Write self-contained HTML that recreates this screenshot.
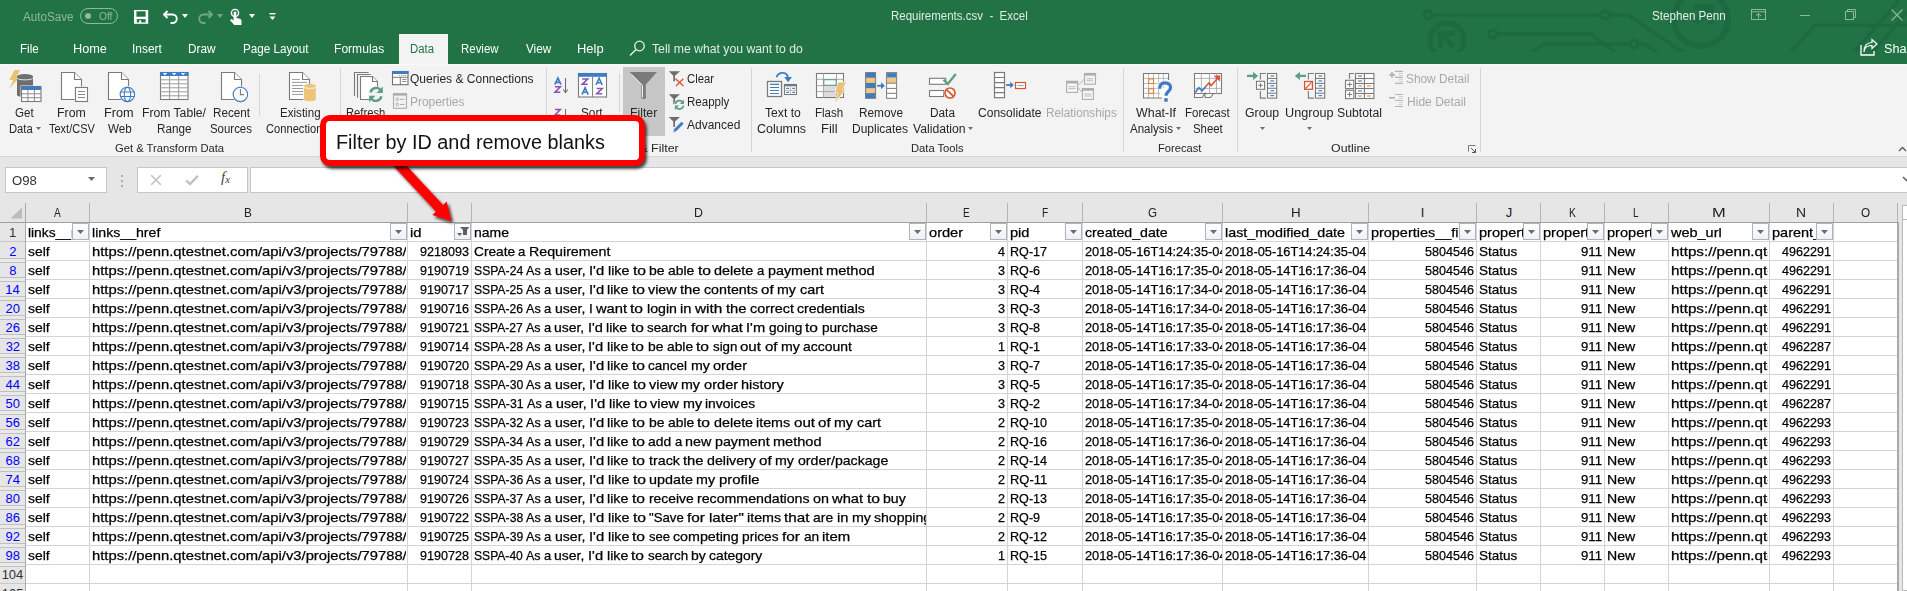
<!DOCTYPE html>
<html><head><meta charset="utf-8"><style>
html,body{margin:0;padding:0;width:1907px;height:591px;overflow:hidden;background:#fff;}
.r{position:absolute;}
.t{position:absolute;white-space:pre;line-height:1;font-family:"Liberation Sans",sans-serif;transform-origin:0 0;}
.g .t{-webkit-text-stroke:0.25px #000;}
svg.r{overflow:visible;}
svg.r.c{overflow:hidden;}
</style></head><body>
<div class="r" style="left:0px;top:0px;width:1907px;height:64px;background:#217346;"></div>
<svg class="r" style="left:1400px;top:0px;overflow:hidden;" width="507" height="52" viewBox="0 0 507 52"><g fill="none" stroke="#1e6a40" stroke-width="3.5">
<circle cx="28" cy="15" r="4"/><line x1="32" y1="15" x2="201" y2="15"/><circle cx="205" cy="15" r="4"/>
<polyline points="209,15 228,15 300,64"/>
<circle cx="93" cy="34" r="4"/><polyline points="97,34 191,34 232,64"/>
<polyline points="128,56 143,44 230,44"/><circle cx="234" cy="44" r="4"/><polyline points="238,44 245,44 262,56"/>
<circle cx="47" cy="40" r="17" stroke-width="5"/>
<circle cx="301" cy="19" r="27" stroke-width="6"/>
<polyline points="385,58 415,25.5 507,25.5"/>
<line x1="450" y1="57" x2="500" y2="-1"/><line x1="470" y1="55" x2="515" y2="3"/>
</g>
<g fill="#1e6a40"><path d="M38,31 L55,31 L55,36 L47,36 L56,45 L52,49 L43,40 L43,48 L38,48Z"/>
<path d="M294,4 L314,4 L314,24 L308,24 L308,14 L297,25 L293,21 L304,10 L294,10Z"/></g></svg>
<div class="t " style="left:22.98px;top:10.85px;font-size:12px;color:#8fb89d;transform:scaleX(0.9712);">AutoSave</div>
<svg class="r" style="left:80px;top:8px;" width="38" height="16" viewBox="0 0 38 16"><rect x="0.5" y="0.5" width="37" height="15" rx="7.5" fill="none" stroke="#8fb89d"/><circle cx="8" cy="8" r="3" fill="#8fb89d"/></svg>
<div class="t " style="left:98.51px;top:11.19px;font-size:11px;color:#8fb89d;transform:scaleX(0.9309);">Off</div>
<svg class="r" style="left:133px;top:9px;" width="16" height="16" viewBox="0 0 16 16"><rect x="1" y="1" width="14.2" height="13.8" fill="#fff"/><rect x="3.4" y="2.3" width="9.2" height="5.4" fill="#217346"/><rect x="3.8" y="10.1" width="8.8" height="3.3" fill="#217346"/><rect x="6.2" y="11.2" width="1.9" height="3" fill="#fff"/></svg>
<svg class="r" style="left:162px;top:9px;" width="17" height="16" viewBox="0 0 17 16"><path d="M2,5.5 H10.5 A4.2,4.2 0 0 1 10.5,14 H8.5" fill="none" stroke="#fff" stroke-width="1.9"/><path d="M5.5,2 L2,5.5 L5.5,9" fill="none" stroke="#fff" stroke-width="1.9"/></svg>
<svg class="r" style="left:182px;top:14px;" width="7" height="5" viewBox="0 0 7 5"><path d="M0,0 H6 L3,4Z" fill="#fff"/></svg>
<svg class="r" style="left:197px;top:9px;" width="17" height="16" viewBox="0 0 17 16"><g opacity="0.75"><path d="M15,5.5 H6.5 A4.2,4.2 0 0 0 6.5,14 H8.5" fill="none" stroke="#8fb89d" stroke-width="1.9"/><path d="M11.5,2 L15,5.5 L11.5,9" fill="none" stroke="#8fb89d" stroke-width="1.9"/></g></svg>
<svg class="r" style="left:217px;top:14px;" width="7" height="5" viewBox="0 0 7 5"><path d="M0,0 H6 L3,4Z" fill="#8fb89d" opacity="0.75"/></svg>
<svg class="r" style="left:229px;top:8px;" width="14" height="18" viewBox="0 0 14 18"><circle cx="6" cy="5" r="3.6" fill="none" stroke="#fff" stroke-width="1.4"/><path d="M4.6,5 A1.4,1.4 0 0 1 7.4,5 V10 L10.8,10.8 A2.2,2.2 0 0 1 12.5,13 V17 H5.3 L1,12.2 L2.2,11 L4.6,12.2Z" fill="#fff"/></svg>
<svg class="r" style="left:249px;top:14px;" width="7" height="5" viewBox="0 0 7 5"><path d="M0,0 H6 L3,4Z" fill="#fff"/></svg>
<svg class="r" style="left:269px;top:13px;" width="8" height="8" viewBox="0 0 8 8"><rect x="0.5" y="0" width="6" height="1.4" fill="#fff"/><path d="M0.5,3.5 H6.5 L3.5,7Z" fill="#fff"/></svg>
<div class="t " style="left:890.56px;top:9.85px;font-size:12px;color:#e1ebe4;transform:scaleX(0.9580);">Requirements.csv  -  Excel</div>
<div class="t " style="left:1652.47px;top:10.35px;font-size:12px;color:#e8efea;transform:scaleX(0.9700);">Stephen Penn</div>
<svg class="r" style="left:1751px;top:9px;" width="15" height="12" viewBox="0 0 15 12"><rect x="0.5" y="0.5" width="14" height="10" fill="none" stroke="#8fb89d"/><line x1="0.5" y1="2.8" x2="14.5" y2="2.8" stroke="#8fb89d"/><path d="M7.5,4.5 L5,7 M7.5,4.5 L10,7 M7.5,4.5 V9.5" stroke="#8fb89d" fill="none"/></svg>
<div class="r" style="left:1800px;top:15px;width:10px;height:1px;background:#8fb89d;"></div>
<svg class="r" style="left:1845px;top:9px;" width="12" height="12" viewBox="0 0 12 12"><rect x="0.5" y="2.5" width="8" height="8" fill="none" stroke="#8fb89d"/><polyline points="2.5,2.5 2.5,0.5 10.5,0.5 10.5,8.5 8.5,8.5" fill="none" stroke="#8fb89d"/></svg>
<svg class="r" style="left:1891px;top:9px;" width="12" height="12" viewBox="0 0 12 12"><path d="M0.5,0.5 L11.5,11.5 M11.5,0.5 L0.5,11.5" stroke="#8fb89d" stroke-width="1.1"/></svg>
<div class="t " style="left:19.85px;top:42.85px;font-size:12px;color:#ffffff;transform:scaleX(0.9653);">File</div>
<div class="t " style="left:72.66px;top:42.85px;font-size:12px;color:#ffffff;transform:scaleX(1.0593);">Home</div>
<div class="t " style="left:132.30px;top:42.85px;font-size:12px;color:#ffffff;transform:scaleX(0.9925);">Insert</div>
<div class="t " style="left:188.23px;top:42.85px;font-size:12px;color:#ffffff;transform:scaleX(0.9835);">Draw</div>
<div class="t " style="left:242.54px;top:42.85px;font-size:12px;color:#ffffff;transform:scaleX(0.9726);">Page Layout</div>
<div class="t " style="left:334.31px;top:42.85px;font-size:12px;color:#ffffff;transform:scaleX(1.0063);">Formulas</div>
<div class="t " style="left:461.46px;top:42.85px;font-size:12px;color:#ffffff;transform:scaleX(0.9534);">Review</div>
<div class="t " style="left:525.75px;top:42.85px;font-size:12px;color:#ffffff;transform:scaleX(0.9779);">View</div>
<div class="t " style="left:576.94px;top:42.85px;font-size:12px;color:#ffffff;transform:scaleX(1.0780);">Help</div>
<div class="r" style="left:399px;top:34px;width:49px;height:30px;background:#f3f3f3;"></div>
<div class="t " style="left:410.47px;top:42.85px;font-size:12px;color:#217346;transform:scaleX(0.9481);">Data</div>
<svg class="r" style="left:629px;top:40px;" width="17" height="16" viewBox="0 0 17 16"><circle cx="10.5" cy="6" r="4.8" fill="none" stroke="#e8efea" stroke-width="1.3"/><line x1="7" y1="9.5" x2="1" y2="15.5" stroke="#e8efea" stroke-width="1.5"/></svg>
<div class="t " style="left:652.33px;top:42.85px;font-size:12px;color:#e3ece6;transform:scaleX(1.0183);">Tell me what you want to do</div>
<svg class="r" style="left:1860px;top:40px;" width="18" height="16" viewBox="0 0 18 16"><path d="M1,5 V15 H14 V11" fill="none" stroke="#fff" stroke-width="1.3"/><path d="M4,12 C4,7 8,5.5 12,5.5 V8.5 L17,4 L12,-0.5 V2.5 C7,2.5 4,6 4,12Z" fill="none" stroke="#fff" stroke-width="1.2"/></svg>
<div class="t " style="left:1883.93px;top:42.85px;font-size:12px;color:#ffffff;transform:scaleX(1.0503);">Share</div>
<div class="r" style="left:0px;top:64px;width:1907px;height:92px;background:#f3f3f3;"></div>
<div class="r" style="left:0px;top:64px;width:1907px;height:1px;background:#f8f8f8;"></div>
<div class="r" style="left:0px;top:156px;width:1907px;height:1px;background:#d5d5d5;"></div>
<div class="r" style="left:623px;top:67px;width:42px;height:69px;background:#c6c6c6;"></div>
<div class="t " style="left:15.42px;top:106.85px;font-size:12px;color:#262626;transform:scaleX(0.9651);">Get</div>
<div class="t " style="left:8.58px;top:122.85px;font-size:12px;color:#262626;transform:scaleX(0.9358);">Data</div>
<div class="t " style="left:57.39px;top:106.85px;font-size:12px;color:#262626;transform:scaleX(1.0297);">From</div>
<div class="t " style="left:48.75px;top:122.85px;font-size:12px;color:#262626;transform:scaleX(0.9156);">Text/CSV</div>
<div class="t " style="left:103.96px;top:106.85px;font-size:12px;color:#262626;transform:scaleX(1.0564);">From</div>
<div class="t " style="left:107.75px;top:122.85px;font-size:12px;color:#262626;transform:scaleX(0.9707);">Web</div>
<div class="t " style="left:141.50px;top:106.85px;font-size:12px;color:#262626;transform:scaleX(1.0137);">From Table/</div>
<div class="t " style="left:157.04px;top:122.85px;font-size:12px;color:#262626;transform:scaleX(0.9751);">Range</div>
<div class="t " style="left:213.04px;top:106.85px;font-size:12px;color:#262626;transform:scaleX(0.9743);">Recent</div>
<div class="t " style="left:210.48px;top:122.85px;font-size:12px;color:#262626;transform:scaleX(0.9525);">Sources</div>
<div class="t " style="left:279.65px;top:106.85px;font-size:12px;color:#262626;transform:scaleX(0.9662);">Existing</div>
<div class="t " style="left:266.43px;top:122.85px;font-size:12px;color:#262626;transform:scaleX(0.9289);">Connections</div>
<div class="t " style="left:346.48px;top:106.85px;font-size:12px;color:#262626;transform:scaleX(0.9341);">Refresh</div>
<div class="t " style="left:410.43px;top:72.85px;font-size:12px;color:#262626;transform:scaleX(1.0017);">Queries &amp; Connections</div>
<div class="t " style="left:581.46px;top:106.85px;font-size:12px;color:#262626;transform:scaleX(0.9824);">Sort</div>
<div class="t " style="left:630.00px;top:106.85px;font-size:12px;color:#262626;transform:scaleX(1.0203);">Filter</div>
<div class="t " style="left:687.03px;top:72.85px;font-size:12px;color:#262626;transform:scaleX(0.9402);">Clear</div>
<div class="t " style="left:686.65px;top:95.85px;font-size:12px;color:#262626;transform:scaleX(0.9623);">Reapply</div>
<div class="t " style="left:686.98px;top:118.85px;font-size:12px;color:#262626;transform:scaleX(0.9985);">Advanced</div>
<div class="t " style="left:764.73px;top:106.85px;font-size:12px;color:#262626;transform:scaleX(1.0123);">Text to</div>
<div class="t " style="left:757.37px;top:122.85px;font-size:12px;color:#262626;transform:scaleX(1.0366);">Columns</div>
<div class="t " style="left:815.05px;top:106.85px;font-size:12px;color:#262626;transform:scaleX(0.9608);">Flash</div>
<div class="t " style="left:820.94px;top:122.85px;font-size:12px;color:#262626;transform:scaleX(1.0782);">Fill</div>
<div class="t " style="left:858.53px;top:106.85px;font-size:12px;color:#262626;transform:scaleX(0.9846);">Remove</div>
<div class="t " style="left:852.02px;top:122.85px;font-size:12px;color:#262626;transform:scaleX(0.9980);">Duplicates</div>
<div class="t " style="left:930.03px;top:106.85px;font-size:12px;color:#262626;transform:scaleX(0.9851);">Data</div>
<div class="t " style="left:912.95px;top:122.85px;font-size:12px;color:#262626;transform:scaleX(1.0160);">Validation</div>
<div class="t " style="left:977.99px;top:106.85px;font-size:12px;color:#262626;transform:scaleX(1.0027);">Consolidate</div>
<div class="t " style="left:1135.95px;top:106.85px;font-size:12px;color:#262626;transform:scaleX(1.0353);">What-If</div>
<div class="t " style="left:1130.48px;top:122.85px;font-size:12px;color:#262626;transform:scaleX(0.9610);">Analysis</div>
<div class="t " style="left:1185.46px;top:106.85px;font-size:12px;color:#262626;transform:scaleX(0.9559);">Forecast</div>
<div class="t " style="left:1193.38px;top:122.85px;font-size:12px;color:#262626;transform:scaleX(0.9471);">Sheet</div>
<div class="t " style="left:1245.38px;top:106.85px;font-size:12px;color:#262626;transform:scaleX(1.0234);">Group</div>
<div class="t " style="left:1285.02px;top:106.85px;font-size:12px;color:#262626;transform:scaleX(1.0538);">Ungroup</div>
<div class="t " style="left:1337.44px;top:106.85px;font-size:12px;color:#262626;transform:scaleX(1.0238);">Subtotal</div>
<div class="t " style="left:410.02px;top:95.85px;font-size:12px;color:#a8a8a8;transform:scaleX(0.9949);">Properties</div>
<div class="t " style="left:1045.63px;top:106.85px;font-size:12px;color:#a8a8a8;transform:scaleX(0.9827);">Relationships</div>
<div class="t " style="left:1406.46px;top:72.85px;font-size:12px;color:#a8a8a8;transform:scaleX(0.9891);">Show Detail</div>
<div class="t " style="left:1406.51px;top:95.85px;font-size:12px;color:#a8a8a8;transform:scaleX(1.0052);">Hide Detail</div>
<div class="t " style="left:115.14px;top:142.69px;font-size:11px;color:#262626;transform:scaleX(1.0195);">Get &amp; Transform Data</div>
<div class="t " style="left:613.43px;top:142.69px;font-size:11px;color:#262626;transform:scaleX(1.1327);">Sort &amp; Filter</div>
<div class="t " style="left:910.78px;top:142.69px;font-size:11px;color:#262626;transform:scaleX(1.0164);">Data Tools</div>
<div class="t " style="left:1158.48px;top:142.69px;font-size:11px;color:#262626;transform:scaleX(1.0141);">Forecast</div>
<div class="t " style="left:1330.91px;top:142.69px;font-size:11px;color:#262626;transform:scaleX(1.1258);">Outline</div>
<svg class="r" style="left:36px;top:127px;" width="6" height="4" viewBox="0 0 6 4"><path d="M0,0 H5 L2.5,3Z" fill="#6a6a6a"/></svg>
<svg class="r" style="left:967.5px;top:127px;" width="6" height="4" viewBox="0 0 6 4"><path d="M0,0 H5 L2.5,3Z" fill="#6a6a6a"/></svg>
<svg class="r" style="left:1176px;top:127px;" width="6" height="4" viewBox="0 0 6 4"><path d="M0,0 H5 L2.5,3Z" fill="#6a6a6a"/></svg>
<svg class="r" style="left:1260px;top:127px;" width="6" height="4" viewBox="0 0 6 4"><path d="M0,0 H5 L2.5,3Z" fill="#6a6a6a"/></svg>
<svg class="r" style="left:1307px;top:127px;" width="6" height="4" viewBox="0 0 6 4"><path d="M0,0 H5 L2.5,3Z" fill="#6a6a6a"/></svg>
<div class="r" style="left:259px;top:74px;width:1px;height:42px;background:#d6d6d6;"></div>
<div class="r" style="left:340px;top:68px;width:1px;height:84px;background:#d6d6d6;"></div>
<div class="r" style="left:546px;top:68px;width:1px;height:84px;background:#d6d6d6;"></div>
<div class="r" style="left:619px;top:74px;width:1px;height:38px;background:#d6d6d6;"></div>
<div class="r" style="left:751px;top:68px;width:1px;height:84px;background:#d6d6d6;"></div>
<div class="r" style="left:1123px;top:68px;width:1px;height:84px;background:#d6d6d6;"></div>
<div class="r" style="left:1237px;top:68px;width:1px;height:84px;background:#d6d6d6;"></div>
<div class="r" style="left:1480px;top:68px;width:1px;height:84px;background:#d6d6d6;"></div>
<svg class="r" style="left:1468px;top:145px;" width="9" height="8" viewBox="0 0 9 8"><path d="M0.5,6.5 V0.5 H7.5" fill="none" stroke="#777"/><path d="M3,3 L7.5,7.5 M7.5,4 V7.5 H4" fill="none" stroke="#555"/></svg>
<svg class="r" style="left:1898px;top:146px;" width="9" height="6" viewBox="0 0 9 6"><path d="M1,5 L4.5,1.5 L8,5" fill="none" stroke="#555" stroke-width="1.3"/></svg>
<svg class="r" style="left:5px;top:66px;" width="40" height="40" viewBox="0 0 40 40"><path d="M9.6,4 H15 L11.2,11.3 H14.3 L4.2,23 L8.4,14 H4.3Z" fill="#ebc070"/>
<path d="M12,10.5 V29 C12,31.5 28,31.5 28,29 V10.5Z" fill="#6f6f6f"/>
<ellipse cx="20" cy="10.5" rx="8" ry="2.6" fill="#6f6f6f"/>
<path d="M12.2,12.2 C13,14.4 27,14.4 27.8,12.2" fill="none" stroke="#f3f3f3" stroke-width="0.9"/>
<rect x="15.5" y="19.5" width="21.5" height="17" fill="#f3f3f3"/>
<rect x="16.5" y="20.5" width="19.5" height="15" fill="#fff" stroke="#7b7b7b" stroke-width="1.1"/>
<rect x="16.5" y="20.5" width="19.5" height="3.5" fill="#3f7cc4"/>
<path d="M22.9,24 V35.5 M29.4,24 V35.5 M16.5,27.8 H36 M16.5,31.7 H36" stroke="#8a8a8a" stroke-width="1"/></svg>
<svg class="r" style="left:55px;top:66px;" width="40" height="40" viewBox="0 0 40 40"><path d="M6.5,6.5 H19.5 L26.5,13.5 V33.5 H6.5Z" fill="#fff" stroke="#7a7a7a" stroke-width="1.1"/><path d="M19.5,6.5 V13.5 H26.5" fill="#fff" stroke="#7a7a7a" stroke-width="1.1"/><rect x="19.5" y="20.5" width="14" height="16" fill="#f3f3f3"/><rect x="20.5" y="21.5" width="12" height="14" fill="#fff" stroke="#7a7a7a" stroke-width="1.1"/>
<path d="M23,25.5 H30 M23,28.5 H30 M23,31.5 H30" stroke="#8a8a8a" stroke-width="1"/></svg>
<svg class="r" style="left:100px;top:66px;" width="40" height="40" viewBox="0 0 40 40"><path d="M8.5,6.5 H21.5 L28.5,13.5 V33.5 H8.5Z" fill="#fff" stroke="#7a7a7a" stroke-width="1.1"/><path d="M21.5,6.5 V13.5 H28.5" fill="#fff" stroke="#7a7a7a" stroke-width="1.1"/><circle cx="27.4" cy="28.4" r="8.3" fill="#f3f3f3"/><circle cx="27.4" cy="28.4" r="7.2" fill="#fff" stroke="#3e7bc4" stroke-width="1.1"/>
<path d="M20.5,26 H34.3 M20.5,30.5 H34.3" stroke="#3e7bc4" stroke-width="1.1"/><ellipse cx="27.4" cy="28.4" rx="3.2" ry="7.2" fill="none" stroke="#3e7bc4" stroke-width="1.1"/></svg>
<svg class="r" style="left:155px;top:66px;" width="40" height="40" viewBox="0 0 40 40"><rect x="5.5" y="6.5" width="27.5" height="27" fill="#fff" stroke="#7b7b7b" stroke-width="1.1"/>
<rect x="5" y="6" width="28.5" height="4" fill="#3f7cc4"/>
<path d="M7.8,7 H12.2 L10,9.3Z M16.9,7 H21.3 L19.1,9.3Z M25.9,7 H30.3 L28.1,9.3Z" fill="#fff"/>
<path d="M14.6,10 V33 M23.7,10 V33 M5.5,13.8 H33 M5.5,17.8 H33 M5.5,21.8 H33 M5.5,25.8 H33 M5.5,29.8 H33" stroke="#9a9a9a" stroke-width="1"/></svg>
<svg class="r" style="left:215px;top:66px;" width="40" height="40" viewBox="0 0 40 40"><path d="M6.5,6.5 H19.5 L26.5,13.5 V33.5 H6.5Z" fill="#fff" stroke="#7a7a7a" stroke-width="1.1"/><path d="M19.5,6.5 V13.5 H26.5" fill="#fff" stroke="#7a7a7a" stroke-width="1.1"/><circle cx="25.4" cy="28.4" r="8.2" fill="#f3f3f3"/><circle cx="25.4" cy="28.4" r="7.2" fill="#fff" stroke="#3e7bc4" stroke-width="1.1"/>
<path d="M25.4,23 V28.6 H29" fill="none" stroke="#7a7a7a" stroke-width="1.1"/></svg>
<svg class="r" style="left:282px;top:66px;" width="40" height="40" viewBox="0 0 40 40"><path d="M7.5,6.5 H20.5 L27.5,13.5 V33.5 H7.5Z" fill="#fff" stroke="#7a7a7a" stroke-width="1.1"/><path d="M20.5,6.5 V13.5 H27.5" fill="#fff" stroke="#7a7a7a" stroke-width="1.1"/><path d="M10,13.4 H18 M10,16.4 H25 M10,19.5 H21 M10,22.5 H21 M10,25.5 H21 M10,28.4 H21" stroke="#9a9a9a" stroke-width="1"/>
<path d="M21.3,19.5 V34 C21.3,36.5 34.4,36.5 34.4,34 V19.5Z" fill="#f3f3f3"/>
<path d="M22,20 V33.5 C22,35.8 33.8,35.8 33.8,33.5 V20Z" fill="#ecc57a"/><ellipse cx="27.9" cy="19.8" rx="5.9" ry="2" fill="#ecc57a"/>
<path d="M22.2,21.2 C23,22.8 33,22.8 33.6,21.2" fill="none" stroke="#fff" stroke-width="0.8"/></svg>
<svg class="r" style="left:350px;top:66px;" width="40" height="40" viewBox="0 0 40 40"><path d="M4.5,29.8 V6.5 H18.6" fill="none" stroke="#7a7a7a" stroke-width="1.1"/><path d="M7.5,31.8 V8.5 H20.6" fill="none" stroke="#7a7a7a" stroke-width="1.1"/><path d="M10.5,10.5 H22.5 L27.5,15.5 V33.5 H10.5Z" fill="#fff" stroke="#7a7a7a" stroke-width="1.1"/><path d="M22.5,10.5 V15.5 H27.5" fill="#fff" stroke="#7a7a7a" stroke-width="1.1"/>
<circle cx="26" cy="28.4" r="8.2" fill="#f3f3f3"/>
<path d="M20.6,26.5 A5.6,5.6 0 0 1 30.8,24.5" fill="none" stroke="#5c9f82" stroke-width="2.4"/><path d="M32.8,20.5 V27 H26.5Z" fill="#5c9f82"/>
<path d="M31.4,30.3 A5.6,5.6 0 0 1 21.2,32.3" fill="none" stroke="#5c9f82" stroke-width="2.4"/><path d="M19.2,36.3 V29.8 H25.5Z" fill="#5c9f82"/></svg>
<svg class="r" style="left:388px;top:68px;" width="24" height="44" viewBox="0 0 24 44"><rect x="4.5" y="3.5" width="15.5" height="13.2" fill="#fff" stroke="#6f6f6f" stroke-width="1.1"/>
<rect x="4" y="3" width="16.5" height="3" fill="#3f7cc4"/>
<path d="M4.5,9.3 H20 M12.3,9.3 V16.7" stroke="#777" stroke-width="1"/>
<path d="M11.2,7.5 h1 M13.2,7.5 h1 M15.2,7.5 h1 M17.2,7.5 h1" stroke="#888" stroke-width="0.9"/>
<path d="M14,11.5 H18.5 M14,13.5 H18.5" stroke="#888" stroke-width="0.9"/>
<rect x="5.5" y="25.8" width="13" height="14.5" fill="#f4f0f4" stroke="#adadad" stroke-width="1.1"/>
<rect x="5" y="25.3" width="14" height="2.3" fill="#adadad"/>
<circle cx="9.3" cy="31.3" r="1.3" fill="none" stroke="#adadad"/><circle cx="9.3" cy="36.5" r="1.3" fill="none" stroke="#adadad"/>
<path d="M12,31.3 H16.5 M12,36.5 H16.5" stroke="#adadad" stroke-width="1"/></svg>
<svg class="r" style="left:550px;top:68px;" width="60" height="48" viewBox="0 0 60 48"><path d="M4.8,16.7 L7.9,10 L11.0,16.7 M6.164,14.422 H9.636" fill="none" stroke="#3f7cc4" stroke-width="1.6"/><path d="M5,18.7 H10.3 L5,24.2 H10.3" fill="none" stroke="#8a55b5" stroke-width="1.6"/><path d="M15.5,10 V24.3 M13.2,21.5 L15.5,24.5 L17.8,21.5" fill="none" stroke="#6f6f6f" stroke-width="1.1"/><path d="M5,41.5 H10.3 L5,47.0 H10.3" fill="none" stroke="#8a55b5" stroke-width="1.6"/><path d="M15.5,41 V48" stroke="#6f6f6f" stroke-width="1.1"/></svg>
<svg class="r" style="left:550px;top:68px;" width="60" height="48" viewBox="0 0 60 48"><rect x="28.5" y="5.5" width="28" height="23.5" fill="#fff" stroke="#7b7b7b" stroke-width="1.1"/>
<rect x="28" y="5" width="29" height="3.8" fill="#3f7cc4"/><path d="M42.6,8.8 V29" stroke="#7b7b7b" stroke-width="1"/><path d="M32.2,11.0 H37.7 L32.2,16.3 H37.7" fill="none" stroke="#8a55b5" stroke-width="1.6"/><path d="M32,26.6 L35.1,19.8 L38.2,26.6 M33.364,24.288 H36.836" fill="none" stroke="#3f7cc4" stroke-width="1.6"/><path d="M46,17.0 L49.1,10.2 L52.2,17.0 M47.364,14.687999999999999 H50.836" fill="none" stroke="#3f7cc4" stroke-width="1.6"/><path d="M46.7,20.5 H52.2 L46.7,25.8 H52.2" fill="none" stroke="#8a55b5" stroke-width="1.6"/></svg>
<svg class="r" style="left:623px;top:67px;" width="42" height="69" viewBox="0 0 42 69"><path d="M6.8,5 H34 L22.8,17.6 V31.8 H18.4 V17.6Z" fill="#7a7a7a"/>
<path d="M9,7.8 L19.5,18.4 V30.5" fill="none" stroke="#fff" stroke-width="0.9"/></svg>
<svg class="r" style="left:666px;top:68px;" width="24" height="66" viewBox="0 0 24 66"><path d="M2.8,3.3 H14.0 L9.0,7.8 V13.3 H7.3 V7.8Z" fill="#6d6d6d"/><path d="M9.5,10.8 L17.5,18 M17.3,10.8 L10,18" stroke="#d9552e" stroke-width="1.3"/><path d="M2.8,26.2 H14.0 L9.0,30.7 V36.2 H7.3 V30.7Z" fill="#6d6d6d"/><circle cx="13.4" cy="36.8" r="5.5" fill="#f3f3f3"/><path d="M9.3,36 A4.2,4.2 0 0 1 16.8,34.3" fill="none" stroke="#5c9f82" stroke-width="1.7"/><path d="M18,31.5 V36 H13.8Z" fill="#5c9f82"/><path d="M17.5,37.6 A4.2,4.2 0 0 1 10,39.3" fill="none" stroke="#5c9f82" stroke-width="1.7"/><path d="M8.8,42 V37.6 H13Z" fill="#5c9f82"/><path d="M2.8,49.1 H14.0 L9.0,53.6 V59.1 H7.3 V53.6Z" fill="#6d6d6d"/><path d="M8.2,63 L16.5,54.7" stroke="#f3f3f3" stroke-width="5"/><path d="M8.8,62.5 L16.6,54.7" stroke="#3f7cc4" stroke-width="3"/><path d="M7.8,63.8 L8.8,62.5" stroke="#3f7cc4" stroke-width="1.5"/></svg>
<svg class="r" style="left:764px;top:68px;" width="36" height="36" viewBox="0 0 36 36"><rect x="3.5" y="13.5" width="14" height="15" fill="#fff" stroke="#7a7a7a" stroke-width="1.3"/>
<path d="M6,16.4 H15 M6,19.5 H15 M6,22.5 H15 M6,25.5 H15" stroke="#3e7bc4" stroke-width="1.1"/>
<rect x="20.5" y="16.5" width="12" height="10" fill="#fff" stroke="#7a7a7a" stroke-width="1.1"/><rect x="20" y="16" width="13" height="2.3" fill="#777"/>
<path d="M26.5,18.3 V26.5 M20.5,22.4 H32.5" stroke="#aaa" stroke-width="0.8"/>
<path d="M22.3,20.4 H25 M28.3,20.4 H31 M22.3,24.4 H25 M28.3,24.4 H31" stroke="#3e7bc4" stroke-width="1.1"/>
<path d="M12.5,9.3 C14.5,3.5 23.5,3 24.2,10.5" fill="none" stroke="#3e7bc4" stroke-width="1.9"/><path d="M20.3,9 H28 L24.1,14.3Z" fill="#3e7bc4"/></svg>
<svg class="r" style="left:813px;top:68px;" width="36" height="36" viewBox="0 0 36 36"><rect x="3.5" y="5.5" width="27" height="24" fill="#fff" stroke="#7a7a7a" stroke-width="1.1"/>
<rect x="11" y="18.5" width="12" height="10.5" fill="#dcdcdc"/>
<path d="M10.4,5.5 V29.5 M23.5,5.5 V29.5 M3.5,11.3 H30.5 M3.5,17.7 H30.5 M3.5,23.6 H30.5" stroke="#a5a5a5" stroke-width="1"/>
<rect x="10.8" y="11.7" width="12.4" height="5.6" fill="#fff" stroke="#5c9f82" stroke-width="1.1"/>
<path d="M25.5,14.5 H33 L28.8,21.8 H32 L22.3,34 L25.3,24.5 H22.4Z" fill="#f3f3f3" stroke="#f3f3f3" stroke-width="1.5"/>
<path d="M25.5,14.5 H33 L28.8,21.8 H32 L22.3,34 L25.3,24.5 H22.4Z" fill="#ebc070"/></svg>
<svg class="r" style="left:862px;top:68px;" width="38" height="36" viewBox="0 0 38 36"><rect x="3.6" y="4.6" width="10" height="25.7" fill="#3e7bc4" stroke="#7a7a7a" stroke-width="1"/>
<rect x="4.1" y="9.7" width="9" height="5.2" fill="#f0c77b"/><rect x="4.1" y="20.1" width="9" height="5" fill="#f0c77b"/>
<rect x="24.6" y="4.6" width="10" height="25.7" fill="#fff" stroke="#7a7a7a" stroke-width="1"/>
<rect x="25.1" y="5.1" width="9" height="4.6" fill="#3e7bc4"/><rect x="25.1" y="9.7" width="9" height="5.2" fill="#f0c77b"/>
<path d="M24.6,15.2 H34.6 M24.6,20.4 H34.6 M24.6,25.3 H34.6" stroke="#7a7a7a" stroke-width="1"/>
<path d="M15.2,17.8 H20" stroke="#3e7bc4" stroke-width="1.8"/><path d="M19,14.3 L22.9,17.8 L19,21.3Z" fill="#3e7bc4"/></svg>
<svg class="r" style="left:925px;top:68px;" width="36" height="36" viewBox="0 0 36 36"><rect x="4.5" y="10.3" width="16.3" height="6" fill="#fff" stroke="#7a7a7a" stroke-width="1.1"/>
<rect x="4.5" y="22.5" width="14.2" height="6" fill="#fff" stroke="#7a7a7a" stroke-width="1.1"/>
<path d="M18.5,11.8 L22.8,16 L30.8,6" fill="none" stroke="#5c9f82" stroke-width="2.3"/>
<circle cx="25" cy="25" r="6.3" fill="#f3f3f3"/><circle cx="25" cy="25" r="5" fill="#fff" stroke="#d9552e" stroke-width="1.7"/><path d="M21.6,21.6 L28.4,28.4" stroke="#d9552e" stroke-width="1.7"/></svg>
<svg class="r" style="left:990px;top:68px;" width="40" height="36" viewBox="0 0 40 36"><rect x="4.5" y="4.5" width="10" height="25.2" fill="#fff" stroke="#7a7a7a" stroke-width="1.2"/>
<path d="M4.5,9.5 H14.5 M4.5,14.6 H14.5 M4.5,19.6 H14.5 M4.5,24.6 H14.5" stroke="#7a7a7a" stroke-width="1.1"/>
<path d="M16.1,17 H21" stroke="#3e7bc4" stroke-width="1.8"/><path d="M20.2,13.8 L23.8,17 L20.2,20.2Z" fill="#3e7bc4"/>
<rect x="25.5" y="14.5" width="10" height="6" fill="#fff" stroke="#d9552e" stroke-width="1.2"/><path d="M27.2,17.5 H33.8" stroke="#999" stroke-width="0.9"/></svg>
<svg class="r" style="left:1062px;top:68px;" width="40" height="36" viewBox="0 0 40 36"><rect x="4.6" y="13.4" width="11" height="11" fill="#f8f4f8" stroke="#adadad" stroke-width="1.1"/><rect x="4.1" y="12.9" width="12" height="2.6" fill="#adadad"/><path d="M6.6,18.7 H13.6 M6.6,20.7 H13.6" stroke="#b5b5b5" stroke-width="0.9"/><rect x="22.5" y="5.5" width="11" height="10.7" fill="#f8f4f8" stroke="#adadad" stroke-width="1.1"/><rect x="22.0" y="5.0" width="12" height="2.6" fill="#adadad"/><path d="M24.5,10.8 H31.5 M24.5,12.8 H31.5" stroke="#b5b5b5" stroke-width="0.9"/><rect x="20.4" y="20.7" width="11" height="10.7" fill="#f8f4f8" stroke="#adadad" stroke-width="1.1"/><rect x="19.9" y="20.2" width="12" height="2.6" fill="#adadad"/><path d="M22.4,26.0 H29.4 M22.4,28.0 H29.4" stroke="#b5b5b5" stroke-width="0.9"/><path d="M15.8,17.5 L22.5,11 M15.8,19.5 L20.4,24.5" stroke="#adadad" stroke-width="0.9"/></svg>
<svg class="r" style="left:1140px;top:68px;" width="36" height="36" viewBox="0 0 36 36"><rect x="3.5" y="5.5" width="25" height="24.5" fill="#fff"/>
<path d="M8.5,5.5 V30 M13.5,5.5 V30 M18.6,5.5 V30 M23.4,5.5 V20 M3.5,10.4 H28.5 M3.5,15.5 H20 M3.5,20.4 H20 M3.5,25.3 H20" stroke="#b4b4b4" stroke-width="0.9"/>
<path d="M28.5,12 V5.5 H3.5 V30 H22" fill="none" stroke="#7a7a7a" stroke-width="1.1"/>
<rect x="8.7" y="10.9" width="4.8" height="4.6" fill="#fff" stroke="#e07b39" stroke-width="1.1"/><rect x="8.7" y="20.8" width="4.8" height="4.6" fill="#fff" stroke="#e07b39" stroke-width="1.1"/>
<path d="M19.6,20.8 C19.6,16.6 22,14.9 25.1,14.9 C28.6,14.9 30.6,17 30.6,19.6 C30.6,23.3 26,23.6 26,27.8" fill="none" stroke="#f3f3f3" stroke-width="5.5"/>
<path d="M19.6,20.8 C19.6,16.6 22,14.9 25.1,14.9 C28.6,14.9 30.6,17 30.6,19.6 C30.6,23.3 26,23.6 26,27.8" fill="none" stroke="#3e7bc4" stroke-width="3.2"/>
<rect x="24.3" y="30.2" width="3.4" height="3.5" fill="#3e7bc4"/></svg>
<svg class="r" style="left:1190px;top:68px;" width="36" height="36" viewBox="0 0 36 36"><path d="M4.5,5.5 H31.5 V25.5 H23.5 L20.5,29.5 H15 V25.5 L12,29.5 H4.5Z" fill="#fff" stroke="#7a7a7a" stroke-width="1.1"/>
<path d="M4.5,25.5 H31.5" stroke="#7a7a7a" stroke-width="1.1"/>
<path d="M11.3,5.5 V25.5 M19.5,5.5 V25.5 M26.5,5.5 V25.5 M4.5,10.4 H31.5 M4.5,20.4 H31.5" stroke="#a8a8a8" stroke-width="0.9"/>
<path d="M5.2,24.4 L8.8,19.8 L12.2,22.8 L16.1,18" fill="none" stroke="#3e7bc4" stroke-width="1.7"/>
<path d="M16.1,18 L19.2,14.9 L21,17.7 L28.5,9.2" fill="none" stroke="#d9552e" stroke-width="1.7"/><path d="M23.6,7.7 L30.2,7.2 L29.8,13.6Z" fill="#d9552e"/></svg>
<svg class="r" style="left:1243px;top:68px;" width="38" height="36" viewBox="0 0 38 36"><rect x="24.5" y="5.5" width="9.2" height="24.6" fill="#fff" stroke="#7a7a7a" stroke-width="1.1"/><path d="M24.5,10.42 H33.7" stroke="#7a7a7a" stroke-width="1.1"/><path d="M24.5,15.34 H33.7" stroke="#7a7a7a" stroke-width="1.1"/><path d="M24.5,20.26 H33.7" stroke="#7a7a7a" stroke-width="1.1"/><path d="M24.5,25.18 H33.7" stroke="#7a7a7a" stroke-width="1.1"/><path d="M27.3,7.96 H31.3" stroke="#3e7bc4" stroke-width="1.1"/><path d="M27.3,12.88 H31.3" stroke="#3e7bc4" stroke-width="1.1"/><path d="M27.3,17.80 H31.3" stroke="#3e7bc4" stroke-width="1.1"/><path d="M27.3,22.72 H31.3" stroke="#3e7bc4" stroke-width="1.1"/><path d="M27.3,27.64 H31.3" stroke="#3e7bc4" stroke-width="1.1"/><path d="M22.8,5.5 H17.4 V11.6 M17.4,23.1 V30.1 H22.8" fill="none" stroke="#7a7a7a" stroke-width="1.1"/><rect x="13.5" y="13.3" width="8" height="8" fill="#fff" stroke="#7a7a7a" stroke-width="1.1"/><path d="M15.2,17.3 H19.8 M17.5,15 V19.6" stroke="#7a7a7a" stroke-width="1"/>
<path d="M4,7.9 H11" stroke="#5c9f82" stroke-width="2.3"/><path d="M10,3.8 L15.2,7.9 L10,12Z" fill="#5c9f82"/></svg>
<svg class="r" style="left:1291px;top:68px;" width="38" height="36" viewBox="0 0 38 36"><rect x="24.5" y="5.5" width="9.2" height="24.6" fill="#fff" stroke="#7a7a7a" stroke-width="1.1"/><path d="M24.5,10.42 H33.7" stroke="#7a7a7a" stroke-width="1.1"/><path d="M24.5,15.34 H33.7" stroke="#7a7a7a" stroke-width="1.1"/><path d="M24.5,20.26 H33.7" stroke="#7a7a7a" stroke-width="1.1"/><path d="M24.5,25.18 H33.7" stroke="#7a7a7a" stroke-width="1.1"/><path d="M27.3,7.96 H31.3" stroke="#3e7bc4" stroke-width="1.1"/><path d="M27.3,12.88 H31.3" stroke="#3e7bc4" stroke-width="1.1"/><path d="M27.3,17.80 H31.3" stroke="#3e7bc4" stroke-width="1.1"/><path d="M27.3,22.72 H31.3" stroke="#3e7bc4" stroke-width="1.1"/><path d="M27.3,27.64 H31.3" stroke="#3e7bc4" stroke-width="1.1"/><path d="M22.8,5.5 H17.4 V11.6 M17.4,23.1 V30.1 H22.8" fill="none" stroke="#7a7a7a" stroke-width="1.1"/><rect x="13.6" y="13.5" width="7.8" height="7.8" fill="#fff" stroke="#d9552e" stroke-width="1.3"/><path d="M14.5,20.5 L20.5,14.3" stroke="#d9552e" stroke-width="1.1"/>
<path d="M8,7.9 H15" stroke="#5c9f82" stroke-width="2.3"/><path d="M9,3.8 L3.8,7.9 L9,12Z" fill="#5c9f82"/></svg>
<svg class="r" style="left:1341px;top:68px;" width="38" height="36" viewBox="0 0 38 36"><rect x="14.5" y="5.5" width="18.4" height="25" fill="#fff" stroke="#7a7a7a" stroke-width="1.1"/><path d="M23.4,5.5 V30.5" stroke="#7a7a7a" stroke-width="1.1"/><path d="M14.5,10.5 H32.9" stroke="#7a7a7a" stroke-width="1.1"/><path d="M14.5,15.5 H32.9" stroke="#7a7a7a" stroke-width="1.1"/><path d="M14.5,20.5 H32.9" stroke="#7a7a7a" stroke-width="1.1"/><path d="M14.5,25.5 H32.9" stroke="#7a7a7a" stroke-width="1.1"/><path d="M17,8 H21" stroke="#3e7bc4" stroke-width="1.1"/><path d="M17,13 H21" stroke="#3e7bc4" stroke-width="1.1"/><path d="M17,18 H21" stroke="#e8883a" stroke-width="1.1"/><path d="M26,18 H30" stroke="#e8883a" stroke-width="1.1"/><path d="M17,23 H21" stroke="#3e7bc4" stroke-width="1.1"/><path d="M17,28 H21" stroke="#e8883a" stroke-width="1.1"/><path d="M26,28 H30" stroke="#e8883a" stroke-width="1.1"/><path d="M8.5,10.7 V5.5 H12.8" fill="none" stroke="#7a7a7a" stroke-width="1.1"/><rect x="4.5" y="12.3" width="8.3" height="8.3" fill="#fff" stroke="#7a7a7a" stroke-width="1.1"/><path d="M6.2,16.450000000000003 H11.1 M8.65,14.0 V18.9" stroke="#7a7a7a" stroke-width="1"/><rect x="4.5" y="22.3" width="8.3" height="8.3" fill="#fff" stroke="#7a7a7a" stroke-width="1.1"/><path d="M6.2,26.450000000000003 H11.1 M8.65,24.0 V28.9" stroke="#7a7a7a" stroke-width="1"/></svg>
<svg class="r" style="left:1385px;top:68px;" width="24" height="44" viewBox="0 0 24 44"><path d="M10,3.4 H17.9 M10,9.4 H17.9 M10,15.4 H17.9" stroke="#b5b5b5" stroke-width="1.1"/><path d="M13.8,5.4 H17.9 M13.8,7.4 H17.9 M13.8,11.4 H17.9 M13.8,13.4 H17.9" stroke="#c5c5c5" stroke-width="0.8"/><path d="M4.1,6.8 H10 M7,4 V9.7" stroke="#b5b5b5" stroke-width="1.8"/><path d="M10,26.5 H17.9 M10,32.5 H17.9 M10,38.5 H17.9" stroke="#b5b5b5" stroke-width="1.1"/><path d="M13.8,28.5 H17.9 M13.8,30.5 H17.9 M13.8,34.5 H17.9 M13.8,36.5 H17.9" stroke="#c5c5c5" stroke-width="0.8"/><path d="M4.1,29.8 H10" stroke="#b5b5b5" stroke-width="1.8"/></svg>
<div class="r" style="left:0px;top:157px;width:1907px;height:66px;background:#e6e6e6;"></div>
<div class="r" style="left:5px;top:167px;width:102px;height:26px;background:#fff;box-sizing:border-box;border:1px solid #c6c6c6;"></div>
<div class="t " style="left:11.78px;top:174.85px;font-size:12px;color:#333;transform:scaleX(1.0930);">O98</div>
<svg class="r" style="left:88px;top:177px;" width="8" height="5" viewBox="0 0 8 5"><path d="M0,0 H7 L3.5,4Z" fill="#6a6a6a"/></svg>
<div class="r" style="left:121px;top:175px;width:2px;height:2px;background:#ababab;"></div>
<div class="r" style="left:121px;top:180px;width:2px;height:2px;background:#ababab;"></div>
<div class="r" style="left:121px;top:185px;width:2px;height:2px;background:#ababab;"></div>
<div class="r" style="left:137px;top:167px;width:111px;height:26px;background:#fff;box-sizing:border-box;border:1px solid #c6c6c6;"></div>
<svg class="r" style="left:150px;top:174px;" width="12" height="12" viewBox="0 0 12 12"><path d="M1.2,1.2 L10.8,10.8 M10.8,1.2 L1.2,10.8" stroke="#c2c2c2" stroke-width="1.6"/></svg>
<svg class="r" style="left:185px;top:174px;" width="14" height="12" viewBox="0 0 14 12"><path d="M1.2,6.3 L5,10 L12.8,1.8" fill="none" stroke="#c2c2c2" stroke-width="2.4"/></svg>
<div class="t" style="left:221px;top:170px;font-family:'Liberation Serif';font-style:italic;font-size:15px;color:#444;line-height:1">f<span style="font-size:11px;position:relative;top:1px">x</span></div>
<div class="r" style="left:250px;top:167px;width:1657px;height:26px;background:#fff;box-sizing:border-box;border:1px solid #c6c6c6;border-right:none;"></div>
<svg class="r" style="left:1902px;top:176px;" width="8" height="6" viewBox="0 0 8 6"><path d="M1,1 L4.5,4.5 L8,1" fill="none" stroke="#555" stroke-width="1.3"/></svg>
<div class="r" style="left:0px;top:203px;width:1899px;height:19px;background:#e6e6e6;"></div>
<div class="r" style="left:0px;top:222px;width:1899px;height:1px;background:#a0a0a0;"></div>
<div class="r" style="left:26px;top:223px;width:1872px;height:368px;background:#fff;"></div>
<div class="r" style="left:0px;top:223px;width:25px;height:368px;background:#e6e6e6;"></div>
<div class="r" style="left:25px;top:203px;width:1px;height:388px;background:#a9a9a9;"></div>
<svg class="r" style="left:10px;top:207px;" width="13" height="12" viewBox="0 0 13 12"><path d="M12,0.6 V11.6 H0.6Z" fill="#bcbcbc"/></svg>
<div class="r" style="left:89px;top:203px;width:1px;height:19px;background:#b4b4b4;"></div>
<div class="t " style="left:54.09px;top:206.00px;font-size:13px;color:#222;transform:scaleX(0.7869);">A</div>
<div class="r" style="left:407px;top:203px;width:1px;height:19px;background:#b4b4b4;"></div>
<div class="t " style="left:244.41px;top:206.00px;font-size:13px;color:#222;transform:scaleX(0.9043);">B</div>
<div class="r" style="left:471px;top:203px;width:1px;height:19px;background:#b4b4b4;"></div>
<div class="t " style="left:435.96px;top:206.00px;font-size:13px;color:#222;transform:scaleX(0.7402);">C</div>
<div class="r" style="left:926px;top:203px;width:1px;height:19px;background:#b4b4b4;"></div>
<div class="t " style="left:694.31px;top:206.00px;font-size:13px;color:#222;transform:scaleX(0.9532);">D</div>
<div class="r" style="left:1007px;top:203px;width:1px;height:19px;background:#b4b4b4;"></div>
<div class="t " style="left:963.47px;top:206.00px;font-size:13px;color:#222;transform:scaleX(0.7681);">E</div>
<div class="r" style="left:1082px;top:203px;width:1px;height:19px;background:#b4b4b4;"></div>
<div class="t " style="left:1041.68px;top:206.00px;font-size:13px;color:#222;transform:scaleX(0.7829);">F</div>
<div class="r" style="left:1222px;top:203px;width:1px;height:19px;background:#b4b4b4;"></div>
<div class="t " style="left:1148.13px;top:206.00px;font-size:13px;color:#222;transform:scaleX(0.8927);">G</div>
<div class="r" style="left:1368px;top:203px;width:1px;height:19px;background:#b4b4b4;"></div>
<div class="t " style="left:1290.68px;top:206.00px;font-size:13px;color:#222;transform:scaleX(1.0270);">H</div>
<div class="r" style="left:1476px;top:203px;width:1px;height:19px;background:#b4b4b4;"></div>
<div class="t " style="left:1420.69px;top:206.00px;font-size:13px;color:#222;transform:scaleX(1.0000);">I</div>
<div class="r" style="left:1540px;top:203px;width:1px;height:19px;background:#b4b4b4;"></div>
<div class="t " style="left:1505.63px;top:206.00px;font-size:13px;color:#222;transform:scaleX(1.0000);">J</div>
<div class="r" style="left:1604px;top:203px;width:1px;height:19px;background:#b4b4b4;"></div>
<div class="t " style="left:1568.72px;top:206.00px;font-size:13px;color:#222;transform:scaleX(0.7892);">K</div>
<div class="r" style="left:1668px;top:203px;width:1px;height:19px;background:#b4b4b4;"></div>
<div class="t " style="left:1633.49px;top:206.00px;font-size:13px;color:#222;transform:scaleX(0.7645);">L</div>
<div class="r" style="left:1769px;top:203px;width:1px;height:19px;background:#b4b4b4;"></div>
<div class="t " style="left:1712.16px;top:206.00px;font-size:13px;color:#222;transform:scaleX(1.2624);">M</div>
<div class="r" style="left:1833px;top:203px;width:1px;height:19px;background:#b4b4b4;"></div>
<div class="t " style="left:1796.46px;top:206.00px;font-size:13px;color:#222;transform:scaleX(1.0740);">N</div>
<div class="r" style="left:1897px;top:203px;width:1px;height:19px;background:#b4b4b4;"></div>
<div class="t " style="left:1860.92px;top:206.00px;font-size:13px;color:#222;transform:scaleX(0.9072);">O</div>
<div class="r" style="left:26px;top:241px;width:1872px;height:1px;background:#d4d4d4;"></div>
<div class="r" style="left:26px;top:260px;width:1872px;height:1px;background:#d4d4d4;"></div>
<div class="r" style="left:26px;top:279px;width:1872px;height:1px;background:#d4d4d4;"></div>
<div class="r" style="left:26px;top:298px;width:1872px;height:1px;background:#d4d4d4;"></div>
<div class="r" style="left:26px;top:317px;width:1872px;height:1px;background:#d4d4d4;"></div>
<div class="r" style="left:26px;top:336px;width:1872px;height:1px;background:#d4d4d4;"></div>
<div class="r" style="left:26px;top:355px;width:1872px;height:1px;background:#d4d4d4;"></div>
<div class="r" style="left:26px;top:374px;width:1872px;height:1px;background:#d4d4d4;"></div>
<div class="r" style="left:26px;top:393px;width:1872px;height:1px;background:#d4d4d4;"></div>
<div class="r" style="left:26px;top:412px;width:1872px;height:1px;background:#d4d4d4;"></div>
<div class="r" style="left:26px;top:431px;width:1872px;height:1px;background:#d4d4d4;"></div>
<div class="r" style="left:26px;top:450px;width:1872px;height:1px;background:#d4d4d4;"></div>
<div class="r" style="left:26px;top:469px;width:1872px;height:1px;background:#d4d4d4;"></div>
<div class="r" style="left:26px;top:488px;width:1872px;height:1px;background:#d4d4d4;"></div>
<div class="r" style="left:26px;top:507px;width:1872px;height:1px;background:#d4d4d4;"></div>
<div class="r" style="left:26px;top:526px;width:1872px;height:1px;background:#d4d4d4;"></div>
<div class="r" style="left:26px;top:545px;width:1872px;height:1px;background:#d4d4d4;"></div>
<div class="r" style="left:26px;top:564px;width:1872px;height:1px;background:#d4d4d4;"></div>
<div class="r" style="left:26px;top:583px;width:1872px;height:1px;background:#d4d4d4;"></div>
<div class="r" style="left:89px;top:223px;width:1px;height:368px;background:#d4d4d4;"></div>
<div class="r" style="left:407px;top:223px;width:1px;height:368px;background:#d4d4d4;"></div>
<div class="r" style="left:471px;top:223px;width:1px;height:368px;background:#d4d4d4;"></div>
<div class="r" style="left:926px;top:223px;width:1px;height:368px;background:#d4d4d4;"></div>
<div class="r" style="left:1007px;top:223px;width:1px;height:368px;background:#d4d4d4;"></div>
<div class="r" style="left:1082px;top:223px;width:1px;height:368px;background:#d4d4d4;"></div>
<div class="r" style="left:1222px;top:223px;width:1px;height:368px;background:#d4d4d4;"></div>
<div class="r" style="left:1368px;top:223px;width:1px;height:368px;background:#d4d4d4;"></div>
<div class="r" style="left:1476px;top:223px;width:1px;height:368px;background:#d4d4d4;"></div>
<div class="r" style="left:1540px;top:223px;width:1px;height:368px;background:#d4d4d4;"></div>
<div class="r" style="left:1604px;top:223px;width:1px;height:368px;background:#d4d4d4;"></div>
<div class="r" style="left:1668px;top:223px;width:1px;height:368px;background:#d4d4d4;"></div>
<div class="r" style="left:1769px;top:223px;width:1px;height:368px;background:#d4d4d4;"></div>
<div class="r" style="left:1833px;top:223px;width:1px;height:368px;background:#d4d4d4;"></div>
<div class="r" style="left:1897px;top:223px;width:2px;height:368px;background:#a9a9a9;"></div>
<div class="r" style="left:1899px;top:203px;width:8px;height:388px;background:#e6e6e6;"></div>
<div class="r" style="left:1902px;top:205px;width:5px;height:386px;background:#fff;box-sizing:border-box;border:1px solid #b8b8b8;border-right:none;"></div>
<div class="r" style="left:1902px;top:219px;width:5px;height:1px;background:#b8b8b8;"></div>
<div class="t " style="left:9.01px;top:226.00px;font-size:13px;color:#333;transform:scaleX(1.0000);">1</div>
<div class="t " style="left:9.18px;top:245.00px;font-size:13px;color:#0000ff;transform:scaleX(1.0000);">2</div>
<div class="t " style="left:9.18px;top:264.00px;font-size:13px;color:#0000ff;transform:scaleX(1.0000);">8</div>
<div class="t " style="left:5.27px;top:283.00px;font-size:13px;color:#0000ff;transform:scaleX(1.0000);">14</div>
<div class="t " style="left:5.50px;top:302.00px;font-size:13px;color:#0000ff;transform:scaleX(1.0000);">20</div>
<div class="t " style="left:5.53px;top:321.00px;font-size:13px;color:#0000ff;transform:scaleX(1.0000);">26</div>
<div class="t " style="left:5.65px;top:340.00px;font-size:13px;color:#0000ff;transform:scaleX(1.0000);">32</div>
<div class="t " style="left:5.60px;top:359.00px;font-size:13px;color:#0000ff;transform:scaleX(1.0000);">38</div>
<div class="t " style="left:5.61px;top:378.00px;font-size:13px;color:#0000ff;transform:scaleX(1.0000);">44</div>
<div class="t " style="left:5.56px;top:397.00px;font-size:13px;color:#0000ff;transform:scaleX(1.0000);">50</div>
<div class="t " style="left:5.60px;top:416.00px;font-size:13px;color:#0000ff;transform:scaleX(1.0000);">56</div>
<div class="t " style="left:5.57px;top:435.00px;font-size:13px;color:#0000ff;transform:scaleX(1.0000);">62</div>
<div class="t " style="left:5.52px;top:454.00px;font-size:13px;color:#0000ff;transform:scaleX(1.0000);">68</div>
<div class="t " style="left:5.43px;top:473.00px;font-size:13px;color:#0000ff;transform:scaleX(1.0000);">74</div>
<div class="t " style="left:5.54px;top:492.00px;font-size:13px;color:#0000ff;transform:scaleX(1.0000);">80</div>
<div class="t " style="left:5.57px;top:511.00px;font-size:13px;color:#0000ff;transform:scaleX(1.0000);">86</div>
<div class="t " style="left:5.59px;top:530.00px;font-size:13px;color:#0000ff;transform:scaleX(1.0000);">92</div>
<div class="t " style="left:5.55px;top:549.00px;font-size:13px;color:#0000ff;transform:scaleX(1.0000);">98</div>
<div class="t " style="left:1.65px;top:568.00px;font-size:13px;color:#333;transform:scaleX(1.0000);">104</div>
<div class="t " style="left:1.73px;top:587.00px;font-size:13px;color:#333;transform:scaleX(1.0000);">105</div>
<div class="r" style="left:0px;top:241px;width:25px;height:1px;background:#c8c8c8;"></div>
<div class="r" style="left:0px;top:258px;width:25px;height:1px;background:#c0c0c0;"></div>
<div class="r" style="left:0px;top:262px;width:25px;height:1px;background:#c0c0c0;"></div>
<div class="r" style="left:0px;top:259px;width:25px;height:3px;background:#e9e9e9;"></div>
<div class="r" style="left:0px;top:277px;width:25px;height:1px;background:#c0c0c0;"></div>
<div class="r" style="left:0px;top:281px;width:25px;height:1px;background:#c0c0c0;"></div>
<div class="r" style="left:0px;top:278px;width:25px;height:3px;background:#e9e9e9;"></div>
<div class="r" style="left:0px;top:296px;width:25px;height:1px;background:#c0c0c0;"></div>
<div class="r" style="left:0px;top:300px;width:25px;height:1px;background:#c0c0c0;"></div>
<div class="r" style="left:0px;top:297px;width:25px;height:3px;background:#e9e9e9;"></div>
<div class="r" style="left:0px;top:315px;width:25px;height:1px;background:#c0c0c0;"></div>
<div class="r" style="left:0px;top:319px;width:25px;height:1px;background:#c0c0c0;"></div>
<div class="r" style="left:0px;top:316px;width:25px;height:3px;background:#e9e9e9;"></div>
<div class="r" style="left:0px;top:334px;width:25px;height:1px;background:#c0c0c0;"></div>
<div class="r" style="left:0px;top:338px;width:25px;height:1px;background:#c0c0c0;"></div>
<div class="r" style="left:0px;top:335px;width:25px;height:3px;background:#e9e9e9;"></div>
<div class="r" style="left:0px;top:353px;width:25px;height:1px;background:#c0c0c0;"></div>
<div class="r" style="left:0px;top:357px;width:25px;height:1px;background:#c0c0c0;"></div>
<div class="r" style="left:0px;top:354px;width:25px;height:3px;background:#e9e9e9;"></div>
<div class="r" style="left:0px;top:372px;width:25px;height:1px;background:#c0c0c0;"></div>
<div class="r" style="left:0px;top:376px;width:25px;height:1px;background:#c0c0c0;"></div>
<div class="r" style="left:0px;top:373px;width:25px;height:3px;background:#e9e9e9;"></div>
<div class="r" style="left:0px;top:391px;width:25px;height:1px;background:#c0c0c0;"></div>
<div class="r" style="left:0px;top:395px;width:25px;height:1px;background:#c0c0c0;"></div>
<div class="r" style="left:0px;top:392px;width:25px;height:3px;background:#e9e9e9;"></div>
<div class="r" style="left:0px;top:410px;width:25px;height:1px;background:#c0c0c0;"></div>
<div class="r" style="left:0px;top:414px;width:25px;height:1px;background:#c0c0c0;"></div>
<div class="r" style="left:0px;top:411px;width:25px;height:3px;background:#e9e9e9;"></div>
<div class="r" style="left:0px;top:429px;width:25px;height:1px;background:#c0c0c0;"></div>
<div class="r" style="left:0px;top:433px;width:25px;height:1px;background:#c0c0c0;"></div>
<div class="r" style="left:0px;top:430px;width:25px;height:3px;background:#e9e9e9;"></div>
<div class="r" style="left:0px;top:448px;width:25px;height:1px;background:#c0c0c0;"></div>
<div class="r" style="left:0px;top:452px;width:25px;height:1px;background:#c0c0c0;"></div>
<div class="r" style="left:0px;top:449px;width:25px;height:3px;background:#e9e9e9;"></div>
<div class="r" style="left:0px;top:467px;width:25px;height:1px;background:#c0c0c0;"></div>
<div class="r" style="left:0px;top:471px;width:25px;height:1px;background:#c0c0c0;"></div>
<div class="r" style="left:0px;top:468px;width:25px;height:3px;background:#e9e9e9;"></div>
<div class="r" style="left:0px;top:486px;width:25px;height:1px;background:#c0c0c0;"></div>
<div class="r" style="left:0px;top:490px;width:25px;height:1px;background:#c0c0c0;"></div>
<div class="r" style="left:0px;top:487px;width:25px;height:3px;background:#e9e9e9;"></div>
<div class="r" style="left:0px;top:505px;width:25px;height:1px;background:#c0c0c0;"></div>
<div class="r" style="left:0px;top:509px;width:25px;height:1px;background:#c0c0c0;"></div>
<div class="r" style="left:0px;top:506px;width:25px;height:3px;background:#e9e9e9;"></div>
<div class="r" style="left:0px;top:524px;width:25px;height:1px;background:#c0c0c0;"></div>
<div class="r" style="left:0px;top:528px;width:25px;height:1px;background:#c0c0c0;"></div>
<div class="r" style="left:0px;top:525px;width:25px;height:3px;background:#e9e9e9;"></div>
<div class="r" style="left:0px;top:543px;width:25px;height:1px;background:#c0c0c0;"></div>
<div class="r" style="left:0px;top:547px;width:25px;height:1px;background:#c0c0c0;"></div>
<div class="r" style="left:0px;top:544px;width:25px;height:3px;background:#e9e9e9;"></div>
<div class="r" style="left:0px;top:562px;width:25px;height:1px;background:#c0c0c0;"></div>
<div class="r" style="left:0px;top:566px;width:25px;height:1px;background:#c0c0c0;"></div>
<div class="r" style="left:0px;top:563px;width:25px;height:3px;background:#e9e9e9;"></div>
<div class="r" style="left:0px;top:583px;width:25px;height:1px;background:#c8c8c8;"></div>
<div class="g">
<div class="r" style="left:26px;top:223px;width:46px;height:18px;overflow:hidden">
<div class="t" style="left:1.60px;top:3.00px;font-size:13px;color:#000;transform:scaleX(1.0602)">links__rel</div>
</div>
<div class="r" style="left:72px;top:223px;width:17px;height:17px;box-sizing:border-box;border:1px solid #abb3be;background:linear-gradient(#ffffff,#eef1f5)"></div>
<svg class="r" style="left:77px;top:230px;" width="8" height="5" viewBox="0 0 8 5"><path d="M0,0 H7 L3.5,4Z" fill="#6b6b6b"/></svg>
<div class="r" style="left:90px;top:223px;width:300px;height:18px;overflow:hidden">
<div class="t" style="left:1.60px;top:3.00px;font-size:13px;color:#000;transform:scaleX(1.0873)">links__href</div>
</div>
<div class="r" style="left:390px;top:223px;width:17px;height:17px;box-sizing:border-box;border:1px solid #abb3be;background:linear-gradient(#ffffff,#eef1f5)"></div>
<svg class="r" style="left:395px;top:230px;" width="8" height="5" viewBox="0 0 8 5"><path d="M0,0 H7 L3.5,4Z" fill="#6b6b6b"/></svg>
<div class="r" style="left:408px;top:223px;width:46px;height:18px;overflow:hidden">
<div class="t" style="left:1.60px;top:3.00px;font-size:13px;color:#000;transform:scaleX(1.1325)">id</div>
</div>
<div class="r" style="left:454px;top:223px;width:17px;height:17px;box-sizing:border-box;border:1px solid #abb3be;background:linear-gradient(#ffffff,#eef1f5)"></div>
<svg class="r" style="left:454px;top:223px;" width="17" height="17" viewBox="0 0 17 17"><path d="M3,10 H8.3 L5.6,13Z" fill="#666"/><path d="M6,4 H15.2 L13,7 V12 H9 V7Z" fill="#5f5f5f"/></svg>
<div class="r" style="left:472px;top:223px;width:437px;height:18px;overflow:hidden">
<div class="t" style="left:1.60px;top:3.00px;font-size:13px;color:#000;transform:scaleX(1.0740)">name</div>
</div>
<div class="r" style="left:909px;top:223px;width:17px;height:17px;box-sizing:border-box;border:1px solid #abb3be;background:linear-gradient(#ffffff,#eef1f5)"></div>
<svg class="r" style="left:914px;top:230px;" width="8" height="5" viewBox="0 0 8 5"><path d="M0,0 H7 L3.5,4Z" fill="#6b6b6b"/></svg>
<div class="r" style="left:927px;top:223px;width:63px;height:18px;overflow:hidden">
<div class="t" style="left:1.60px;top:3.00px;font-size:13px;color:#000;transform:scaleX(1.1242)">order</div>
</div>
<div class="r" style="left:990px;top:223px;width:17px;height:17px;box-sizing:border-box;border:1px solid #abb3be;background:linear-gradient(#ffffff,#eef1f5)"></div>
<svg class="r" style="left:995px;top:230px;" width="8" height="5" viewBox="0 0 8 5"><path d="M0,0 H7 L3.5,4Z" fill="#6b6b6b"/></svg>
<div class="r" style="left:1008px;top:223px;width:57px;height:18px;overflow:hidden">
<div class="t" style="left:1.60px;top:3.00px;font-size:13px;color:#000;transform:scaleX(1.1203)">pid</div>
</div>
<div class="r" style="left:1065px;top:223px;width:17px;height:17px;box-sizing:border-box;border:1px solid #abb3be;background:linear-gradient(#ffffff,#eef1f5)"></div>
<svg class="r" style="left:1070px;top:230px;" width="8" height="5" viewBox="0 0 8 5"><path d="M0,0 H7 L3.5,4Z" fill="#6b6b6b"/></svg>
<div class="r" style="left:1083px;top:223px;width:122px;height:18px;overflow:hidden">
<div class="t" style="left:1.60px;top:3.00px;font-size:13px;color:#000;transform:scaleX(1.0883)">created_date</div>
</div>
<div class="r" style="left:1205px;top:223px;width:17px;height:17px;box-sizing:border-box;border:1px solid #abb3be;background:linear-gradient(#ffffff,#eef1f5)"></div>
<svg class="r" style="left:1210px;top:230px;" width="8" height="5" viewBox="0 0 8 5"><path d="M0,0 H7 L3.5,4Z" fill="#6b6b6b"/></svg>
<div class="r" style="left:1223px;top:223px;width:128px;height:18px;overflow:hidden">
<div class="t" style="left:1.60px;top:3.00px;font-size:13px;color:#000;transform:scaleX(1.0998)">last_modified_date</div>
</div>
<div class="r" style="left:1351px;top:223px;width:17px;height:17px;box-sizing:border-box;border:1px solid #abb3be;background:linear-gradient(#ffffff,#eef1f5)"></div>
<svg class="r" style="left:1356px;top:230px;" width="8" height="5" viewBox="0 0 8 5"><path d="M0,0 H7 L3.5,4Z" fill="#6b6b6b"/></svg>
<div class="r" style="left:1369px;top:223px;width:90px;height:18px;overflow:hidden">
<div class="t" style="left:1.60px;top:3.00px;font-size:13px;color:#000;transform:scaleX(1.1094)">properties__field_id</div>
</div>
<div class="r" style="left:1459px;top:223px;width:17px;height:17px;box-sizing:border-box;border:1px solid #abb3be;background:linear-gradient(#ffffff,#eef1f5)"></div>
<svg class="r" style="left:1464px;top:230px;" width="8" height="5" viewBox="0 0 8 5"><path d="M0,0 H7 L3.5,4Z" fill="#6b6b6b"/></svg>
<div class="r" style="left:1477px;top:223px;width:46px;height:18px;overflow:hidden">
<div class="t" style="left:1.60px;top:3.00px;font-size:13px;color:#000;transform:scaleX(1.1201)">properties__field_name</div>
</div>
<div class="r" style="left:1523px;top:223px;width:17px;height:17px;box-sizing:border-box;border:1px solid #abb3be;background:linear-gradient(#ffffff,#eef1f5)"></div>
<svg class="r" style="left:1528px;top:230px;" width="8" height="5" viewBox="0 0 8 5"><path d="M0,0 H7 L3.5,4Z" fill="#6b6b6b"/></svg>
<div class="r" style="left:1541px;top:223px;width:46px;height:18px;overflow:hidden">
<div class="t" style="left:1.60px;top:3.00px;font-size:13px;color:#000;transform:scaleX(1.1201)">properties__field_value</div>
</div>
<div class="r" style="left:1587px;top:223px;width:17px;height:17px;box-sizing:border-box;border:1px solid #abb3be;background:linear-gradient(#ffffff,#eef1f5)"></div>
<svg class="r" style="left:1592px;top:230px;" width="8" height="5" viewBox="0 0 8 5"><path d="M0,0 H7 L3.5,4Z" fill="#6b6b6b"/></svg>
<div class="r" style="left:1605px;top:223px;width:46px;height:18px;overflow:hidden">
<div class="t" style="left:1.60px;top:3.00px;font-size:13px;color:#000;transform:scaleX(1.1201)">properties__field_value_name</div>
</div>
<div class="r" style="left:1651px;top:223px;width:17px;height:17px;box-sizing:border-box;border:1px solid #abb3be;background:linear-gradient(#ffffff,#eef1f5)"></div>
<svg class="r" style="left:1656px;top:230px;" width="8" height="5" viewBox="0 0 8 5"><path d="M0,0 H7 L3.5,4Z" fill="#6b6b6b"/></svg>
<div class="r" style="left:1669px;top:223px;width:83px;height:18px;overflow:hidden">
<div class="t" style="left:1.60px;top:3.00px;font-size:13px;color:#000;transform:scaleX(1.1135)">web_url</div>
</div>
<div class="r" style="left:1752px;top:223px;width:17px;height:17px;box-sizing:border-box;border:1px solid #abb3be;background:linear-gradient(#ffffff,#eef1f5)"></div>
<svg class="r" style="left:1757px;top:230px;" width="8" height="5" viewBox="0 0 8 5"><path d="M0,0 H7 L3.5,4Z" fill="#6b6b6b"/></svg>
<div class="r" style="left:1770px;top:223px;width:46px;height:18px;overflow:hidden">
<div class="t" style="left:1.60px;top:3.00px;font-size:13px;color:#000;transform:scaleX(1.1164)">parent_id</div>
</div>
<div class="r" style="left:1816px;top:223px;width:17px;height:17px;box-sizing:border-box;border:1px solid #abb3be;background:linear-gradient(#ffffff,#eef1f5)"></div>
<svg class="r" style="left:1821px;top:230px;" width="8" height="5" viewBox="0 0 8 5"><path d="M0,0 H7 L3.5,4Z" fill="#6b6b6b"/></svg>
<div class="r" style="left:26px;top:242px;width:63px;height:18px;overflow:hidden">
<div class="t" style="left:1.60px;top:3.00px;font-size:13px;color:#000;transform:scaleX(1.0680)">self</div>
</div>
<div class="r" style="left:90px;top:242px;width:316px;height:18px;overflow:hidden">
<div class="t" style="left:1.60px;top:3.00px;font-size:13px;color:#000;transform:scaleX(1.1370)">https://penn.qtestnet.com/api/v3/projects/79788/requirements/9218093</div>
</div>
<div class="r" style="left:408px;top:242px;width:63px;height:18px;overflow:hidden">
<div class="t" style="left:11.70px;top:3.00px;font-size:13px;color:#000;transform:scaleX(0.9682)">9218093</div>
</div>
<div class="r" style="left:472px;top:242px;width:454px;height:18px;overflow:hidden">
<div class="t" style="left:1.60px;top:3.00px;font-size:13px;color:#000;transform:scaleX(1.0538)">Create</div><div class="t" style="left:46.17px;top:3.00px;font-size:13px;color:#000;transform:scaleX(1.0124)">a</div><div class="t" style="left:56.95px;top:3.00px;font-size:13px;color:#000;transform:scaleX(1.0930)">Requirement</div>
</div>
<div class="r" style="left:927px;top:242px;width:80px;height:18px;overflow:hidden">
<div class="t" style="left:70.70px;top:3.00px;font-size:13px;color:#000;transform:scaleX(0.9682)">4</div>
</div>
<div class="r" style="left:1008px;top:242px;width:74px;height:18px;overflow:hidden">
<div class="t" style="left:1.60px;top:3.00px;font-size:13px;color:#000;transform:scaleX(0.9690)">RQ-17</div>
</div>
<div class="r" style="left:1083px;top:242px;width:139px;height:18px;overflow:hidden">
<div class="t" style="left:1.60px;top:3.00px;font-size:13px;color:#000;transform:scaleX(0.9843)">2018-05-16T14:24:35-04</div>
</div>
<div class="r" style="left:1223px;top:242px;width:145px;height:18px;overflow:hidden">
<div class="t" style="left:1.60px;top:3.00px;font-size:13px;color:#000;transform:scaleX(0.9835)">2018-05-16T14:24:35-04</div>
</div>
<div class="r" style="left:1369px;top:242px;width:107px;height:18px;overflow:hidden">
<div class="t" style="left:55.70px;top:3.00px;font-size:13px;color:#000;transform:scaleX(0.9682)">5804546</div>
</div>
<div class="r" style="left:1477px;top:242px;width:63px;height:18px;overflow:hidden">
<div class="t" style="left:1.60px;top:3.00px;font-size:13px;color:#000;transform:scaleX(1.0400)">Status</div>
</div>
<div class="r" style="left:1541px;top:242px;width:63px;height:18px;overflow:hidden">
<div class="t" style="left:39.70px;top:3.00px;font-size:13px;color:#000;transform:scaleX(1.0133)">911</div>
</div>
<div class="r" style="left:1605px;top:242px;width:63px;height:18px;overflow:hidden">
<div class="t" style="left:1.60px;top:3.00px;font-size:13px;color:#000;transform:scaleX(1.0845)">New</div>
</div>
<div class="r" style="left:1669px;top:242px;width:99px;height:18px;overflow:hidden">
<div class="t" style="left:1.60px;top:3.00px;font-size:13px;color:#000;transform:scaleX(1.1678)">https://penn.qtestnet.com/p/79788/portal/project#tab=requirements&amp;object=5&amp;id=9218093</div>
</div>
<div class="r" style="left:1770px;top:242px;width:63px;height:18px;overflow:hidden">
<div class="t" style="left:11.70px;top:3.00px;font-size:13px;color:#000;transform:scaleX(0.9682)">4962291</div>
</div>
<div class="r" style="left:26px;top:261px;width:63px;height:18px;overflow:hidden">
<div class="t" style="left:1.60px;top:3.00px;font-size:13px;color:#000;transform:scaleX(1.0680)">self</div>
</div>
<div class="r" style="left:90px;top:261px;width:316px;height:18px;overflow:hidden">
<div class="t" style="left:1.60px;top:3.00px;font-size:13px;color:#000;transform:scaleX(1.1370)">https://penn.qtestnet.com/api/v3/projects/79788/requirements/9190719</div>
</div>
<div class="r" style="left:408px;top:261px;width:63px;height:18px;overflow:hidden">
<div class="t" style="left:11.70px;top:3.00px;font-size:13px;color:#000;transform:scaleX(0.9682)">9190719</div>
</div>
<div class="r" style="left:472px;top:261px;width:454px;height:18px;overflow:hidden">
<div class="t" style="left:1.60px;top:3.00px;font-size:13px;color:#000;transform:scaleX(0.9375)">SSPA-24</div><div class="t" style="left:54.26px;top:3.00px;font-size:13px;color:#000;transform:scaleX(0.9703)">As</div><div class="t" style="left:72.41px;top:3.00px;font-size:13px;color:#000;transform:scaleX(1.0057)">a</div><div class="t" style="left:83.11px;top:3.00px;font-size:13px;color:#000;transform:scaleX(1.0838)">user,</div><div class="t" style="left:117.09px;top:3.00px;font-size:13px;color:#000;transform:scaleX(1.1371)">I'd</div><div class="t" style="left:135.67px;top:3.00px;font-size:13px;color:#000;transform:scaleX(1.0982)">like</div><div class="t" style="left:160.53px;top:3.00px;font-size:13px;color:#000;transform:scaleX(1.2074)">to</div><div class="t" style="left:177.05px;top:3.00px;font-size:13px;color:#000;transform:scaleX(1.0739)">be</div><div class="t" style="left:196.01px;top:3.00px;font-size:13px;color:#000;transform:scaleX(1.0694)">able</div><div class="t" style="left:225.73px;top:3.00px;font-size:13px;color:#000;transform:scaleX(1.2074)">to</div><div class="t" style="left:242.25px;top:3.00px;font-size:13px;color:#000;transform:scaleX(1.1068)">delete</div><div class="t" style="left:284.88px;top:3.00px;font-size:13px;color:#000;transform:scaleX(1.0057)">a</div><div class="t" style="left:295.59px;top:3.00px;font-size:13px;color:#000;transform:scaleX(1.1002)">payment</div><div class="t" style="left:353.88px;top:3.00px;font-size:13px;color:#000;transform:scaleX(1.1236)">method</div>
</div>
<div class="r" style="left:927px;top:261px;width:80px;height:18px;overflow:hidden">
<div class="t" style="left:70.70px;top:3.00px;font-size:13px;color:#000;transform:scaleX(0.9682)">3</div>
</div>
<div class="r" style="left:1008px;top:261px;width:74px;height:18px;overflow:hidden">
<div class="t" style="left:1.60px;top:3.00px;font-size:13px;color:#000;transform:scaleX(0.9692)">RQ-6</div>
</div>
<div class="r" style="left:1083px;top:261px;width:139px;height:18px;overflow:hidden">
<div class="t" style="left:1.60px;top:3.00px;font-size:13px;color:#000;transform:scaleX(0.9843)">2018-05-14T16:17:35-04</div>
</div>
<div class="r" style="left:1223px;top:261px;width:145px;height:18px;overflow:hidden">
<div class="t" style="left:1.60px;top:3.00px;font-size:13px;color:#000;transform:scaleX(0.9835)">2018-05-14T16:17:36-04</div>
</div>
<div class="r" style="left:1369px;top:261px;width:107px;height:18px;overflow:hidden">
<div class="t" style="left:55.70px;top:3.00px;font-size:13px;color:#000;transform:scaleX(0.9682)">5804546</div>
</div>
<div class="r" style="left:1477px;top:261px;width:63px;height:18px;overflow:hidden">
<div class="t" style="left:1.60px;top:3.00px;font-size:13px;color:#000;transform:scaleX(1.0400)">Status</div>
</div>
<div class="r" style="left:1541px;top:261px;width:63px;height:18px;overflow:hidden">
<div class="t" style="left:39.70px;top:3.00px;font-size:13px;color:#000;transform:scaleX(1.0133)">911</div>
</div>
<div class="r" style="left:1605px;top:261px;width:63px;height:18px;overflow:hidden">
<div class="t" style="left:1.60px;top:3.00px;font-size:13px;color:#000;transform:scaleX(1.0845)">New</div>
</div>
<div class="r" style="left:1669px;top:261px;width:99px;height:18px;overflow:hidden">
<div class="t" style="left:1.60px;top:3.00px;font-size:13px;color:#000;transform:scaleX(1.1678)">https://penn.qtestnet.com/p/79788/portal/project#tab=requirements&amp;object=5&amp;id=9190719</div>
</div>
<div class="r" style="left:1770px;top:261px;width:63px;height:18px;overflow:hidden">
<div class="t" style="left:11.70px;top:3.00px;font-size:13px;color:#000;transform:scaleX(0.9682)">4962291</div>
</div>
<div class="r" style="left:26px;top:280px;width:63px;height:18px;overflow:hidden">
<div class="t" style="left:1.60px;top:3.00px;font-size:13px;color:#000;transform:scaleX(1.0680)">self</div>
</div>
<div class="r" style="left:90px;top:280px;width:316px;height:18px;overflow:hidden">
<div class="t" style="left:1.60px;top:3.00px;font-size:13px;color:#000;transform:scaleX(1.1370)">https://penn.qtestnet.com/api/v3/projects/79788/requirements/9190717</div>
</div>
<div class="r" style="left:408px;top:280px;width:63px;height:18px;overflow:hidden">
<div class="t" style="left:11.70px;top:3.00px;font-size:13px;color:#000;transform:scaleX(0.9682)">9190717</div>
</div>
<div class="r" style="left:472px;top:280px;width:454px;height:18px;overflow:hidden">
<div class="t" style="left:1.60px;top:3.00px;font-size:13px;color:#000;transform:scaleX(0.9329)">SSPA-25</div><div class="t" style="left:54.00px;top:3.00px;font-size:13px;color:#000;transform:scaleX(0.9656)">As</div><div class="t" style="left:72.07px;top:3.00px;font-size:13px;color:#000;transform:scaleX(1.0009)">a</div><div class="t" style="left:82.72px;top:3.00px;font-size:13px;color:#000;transform:scaleX(1.0786)">user,</div><div class="t" style="left:116.53px;top:3.00px;font-size:13px;color:#000;transform:scaleX(1.1316)">I'd</div><div class="t" style="left:135.02px;top:3.00px;font-size:13px;color:#000;transform:scaleX(1.0929)">like</div><div class="t" style="left:159.76px;top:3.00px;font-size:13px;color:#000;transform:scaleX(1.2015)">to</div><div class="t" style="left:176.20px;top:3.00px;font-size:13px;color:#000;transform:scaleX(1.0999)">view</div><div class="t" style="left:208.22px;top:3.00px;font-size:13px;color:#000;transform:scaleX(1.1351)">the</div><div class="t" style="left:232.15px;top:3.00px;font-size:13px;color:#000;transform:scaleX(1.0942)">contents</div><div class="t" style="left:289.34px;top:3.00px;font-size:13px;color:#000;transform:scaleX(1.1600)">of</div><div class="t" style="left:305.33px;top:3.00px;font-size:13px;color:#000;transform:scaleX(1.0910)">my</div><div class="t" style="left:327.65px;top:3.00px;font-size:13px;color:#000;transform:scaleX(1.1052)">cart</div>
</div>
<div class="r" style="left:927px;top:280px;width:80px;height:18px;overflow:hidden">
<div class="t" style="left:70.70px;top:3.00px;font-size:13px;color:#000;transform:scaleX(0.9682)">3</div>
</div>
<div class="r" style="left:1008px;top:280px;width:74px;height:18px;overflow:hidden">
<div class="t" style="left:1.60px;top:3.00px;font-size:13px;color:#000;transform:scaleX(0.9692)">RQ-4</div>
</div>
<div class="r" style="left:1083px;top:280px;width:139px;height:18px;overflow:hidden">
<div class="t" style="left:1.60px;top:3.00px;font-size:13px;color:#000;transform:scaleX(0.9843)">2018-05-14T16:17:34-04</div>
</div>
<div class="r" style="left:1223px;top:280px;width:145px;height:18px;overflow:hidden">
<div class="t" style="left:1.60px;top:3.00px;font-size:13px;color:#000;transform:scaleX(0.9835)">2018-05-14T16:17:36-04</div>
</div>
<div class="r" style="left:1369px;top:280px;width:107px;height:18px;overflow:hidden">
<div class="t" style="left:55.70px;top:3.00px;font-size:13px;color:#000;transform:scaleX(0.9682)">5804546</div>
</div>
<div class="r" style="left:1477px;top:280px;width:63px;height:18px;overflow:hidden">
<div class="t" style="left:1.60px;top:3.00px;font-size:13px;color:#000;transform:scaleX(1.0400)">Status</div>
</div>
<div class="r" style="left:1541px;top:280px;width:63px;height:18px;overflow:hidden">
<div class="t" style="left:39.70px;top:3.00px;font-size:13px;color:#000;transform:scaleX(1.0133)">911</div>
</div>
<div class="r" style="left:1605px;top:280px;width:63px;height:18px;overflow:hidden">
<div class="t" style="left:1.60px;top:3.00px;font-size:13px;color:#000;transform:scaleX(1.0845)">New</div>
</div>
<div class="r" style="left:1669px;top:280px;width:99px;height:18px;overflow:hidden">
<div class="t" style="left:1.60px;top:3.00px;font-size:13px;color:#000;transform:scaleX(1.1678)">https://penn.qtestnet.com/p/79788/portal/project#tab=requirements&amp;object=5&amp;id=9190717</div>
</div>
<div class="r" style="left:1770px;top:280px;width:63px;height:18px;overflow:hidden">
<div class="t" style="left:11.70px;top:3.00px;font-size:13px;color:#000;transform:scaleX(0.9682)">4962291</div>
</div>
<div class="r" style="left:26px;top:299px;width:63px;height:18px;overflow:hidden">
<div class="t" style="left:1.60px;top:3.00px;font-size:13px;color:#000;transform:scaleX(1.0680)">self</div>
</div>
<div class="r" style="left:90px;top:299px;width:316px;height:18px;overflow:hidden">
<div class="t" style="left:1.60px;top:3.00px;font-size:13px;color:#000;transform:scaleX(1.1370)">https://penn.qtestnet.com/api/v3/projects/79788/requirements/9190716</div>
</div>
<div class="r" style="left:408px;top:299px;width:63px;height:18px;overflow:hidden">
<div class="t" style="left:11.70px;top:3.00px;font-size:13px;color:#000;transform:scaleX(0.9682)">9190716</div>
</div>
<div class="r" style="left:472px;top:299px;width:454px;height:18px;overflow:hidden">
<div class="t" style="left:1.60px;top:3.00px;font-size:13px;color:#000;transform:scaleX(0.9336)">SSPA-26</div><div class="t" style="left:54.04px;top:3.00px;font-size:13px;color:#000;transform:scaleX(0.9664)">As</div><div class="t" style="left:72.12px;top:3.00px;font-size:13px;color:#000;transform:scaleX(1.0016)">a</div><div class="t" style="left:82.78px;top:3.00px;font-size:13px;color:#000;transform:scaleX(1.0794)">user,</div><div class="t" style="left:116.62px;top:3.00px;font-size:13px;color:#000;transform:scaleX(1.0546)">I</div><div class="t" style="left:123.85px;top:3.00px;font-size:13px;color:#000;transform:scaleX(1.1310)">want</div><div class="t" style="left:158.32px;top:3.00px;font-size:13px;color:#000;transform:scaleX(1.2024)">to</div><div class="t" style="left:174.77px;top:3.00px;font-size:13px;color:#000;transform:scaleX(1.0912)">login</div><div class="t" style="left:208.16px;top:3.00px;font-size:13px;color:#000;transform:scaleX(1.1279)">in</div><div class="t" style="left:222.99px;top:3.00px;font-size:13px;color:#000;transform:scaleX(1.1802)">with</div><div class="t" style="left:253.70px;top:3.00px;font-size:13px;color:#000;transform:scaleX(1.1360)">the</div><div class="t" style="left:277.64px;top:3.00px;font-size:13px;color:#000;transform:scaleX(1.1046)">correct</div><div class="t" style="left:324.95px;top:3.00px;font-size:13px;color:#000;transform:scaleX(1.0777)">credentials</div>
</div>
<div class="r" style="left:927px;top:299px;width:80px;height:18px;overflow:hidden">
<div class="t" style="left:70.70px;top:3.00px;font-size:13px;color:#000;transform:scaleX(0.9682)">3</div>
</div>
<div class="r" style="left:1008px;top:299px;width:74px;height:18px;overflow:hidden">
<div class="t" style="left:1.60px;top:3.00px;font-size:13px;color:#000;transform:scaleX(0.9692)">RQ-3</div>
</div>
<div class="r" style="left:1083px;top:299px;width:139px;height:18px;overflow:hidden">
<div class="t" style="left:1.60px;top:3.00px;font-size:13px;color:#000;transform:scaleX(0.9843)">2018-05-14T16:17:34-04</div>
</div>
<div class="r" style="left:1223px;top:299px;width:145px;height:18px;overflow:hidden">
<div class="t" style="left:1.60px;top:3.00px;font-size:13px;color:#000;transform:scaleX(0.9835)">2018-05-14T16:17:36-04</div>
</div>
<div class="r" style="left:1369px;top:299px;width:107px;height:18px;overflow:hidden">
<div class="t" style="left:55.70px;top:3.00px;font-size:13px;color:#000;transform:scaleX(0.9682)">5804546</div>
</div>
<div class="r" style="left:1477px;top:299px;width:63px;height:18px;overflow:hidden">
<div class="t" style="left:1.60px;top:3.00px;font-size:13px;color:#000;transform:scaleX(1.0400)">Status</div>
</div>
<div class="r" style="left:1541px;top:299px;width:63px;height:18px;overflow:hidden">
<div class="t" style="left:39.70px;top:3.00px;font-size:13px;color:#000;transform:scaleX(1.0133)">911</div>
</div>
<div class="r" style="left:1605px;top:299px;width:63px;height:18px;overflow:hidden">
<div class="t" style="left:1.60px;top:3.00px;font-size:13px;color:#000;transform:scaleX(1.0845)">New</div>
</div>
<div class="r" style="left:1669px;top:299px;width:99px;height:18px;overflow:hidden">
<div class="t" style="left:1.60px;top:3.00px;font-size:13px;color:#000;transform:scaleX(1.1678)">https://penn.qtestnet.com/p/79788/portal/project#tab=requirements&amp;object=5&amp;id=9190716</div>
</div>
<div class="r" style="left:1770px;top:299px;width:63px;height:18px;overflow:hidden">
<div class="t" style="left:11.70px;top:3.00px;font-size:13px;color:#000;transform:scaleX(0.9682)">4962291</div>
</div>
<div class="r" style="left:26px;top:318px;width:63px;height:18px;overflow:hidden">
<div class="t" style="left:1.60px;top:3.00px;font-size:13px;color:#000;transform:scaleX(1.0680)">self</div>
</div>
<div class="r" style="left:90px;top:318px;width:316px;height:18px;overflow:hidden">
<div class="t" style="left:1.60px;top:3.00px;font-size:13px;color:#000;transform:scaleX(1.1370)">https://penn.qtestnet.com/api/v3/projects/79788/requirements/9190721</div>
</div>
<div class="r" style="left:408px;top:318px;width:63px;height:18px;overflow:hidden">
<div class="t" style="left:11.70px;top:3.00px;font-size:13px;color:#000;transform:scaleX(0.9682)">9190721</div>
</div>
<div class="r" style="left:472px;top:318px;width:454px;height:18px;overflow:hidden">
<div class="t" style="left:1.60px;top:3.00px;font-size:13px;color:#000;transform:scaleX(0.9277)">SSPA-27</div><div class="t" style="left:53.71px;top:3.00px;font-size:13px;color:#000;transform:scaleX(0.9602)">As</div><div class="t" style="left:71.67px;top:3.00px;font-size:13px;color:#000;transform:scaleX(0.9953)">a</div><div class="t" style="left:82.26px;top:3.00px;font-size:13px;color:#000;transform:scaleX(1.0725)">user,</div><div class="t" style="left:115.89px;top:3.00px;font-size:13px;color:#000;transform:scaleX(1.1253)">I'd</div><div class="t" style="left:134.28px;top:3.00px;font-size:13px;color:#000;transform:scaleX(1.0867)">like</div><div class="t" style="left:158.87px;top:3.00px;font-size:13px;color:#000;transform:scaleX(1.1948)">to</div><div class="t" style="left:175.22px;top:3.00px;font-size:13px;color:#000;transform:scaleX(1.0258)">search</div><div class="t" style="left:218.64px;top:3.00px;font-size:13px;color:#000;transform:scaleX(1.1696)">for</div><div class="t" style="left:239.78px;top:3.00px;font-size:13px;color:#000;transform:scaleX(1.1238)">what</div><div class="t" style="left:274.04px;top:3.00px;font-size:13px;color:#000;transform:scaleX(1.1287)">I'm</div><div class="t" style="left:296.54px;top:3.00px;font-size:13px;color:#000;transform:scaleX(1.0502)">going</div><div class="t" style="left:333.34px;top:3.00px;font-size:13px;color:#000;transform:scaleX(1.1948)">to</div><div class="t" style="left:349.69px;top:3.00px;font-size:13px;color:#000;transform:scaleX(1.0436)">purchase</div>
</div>
<div class="r" style="left:927px;top:318px;width:80px;height:18px;overflow:hidden">
<div class="t" style="left:70.70px;top:3.00px;font-size:13px;color:#000;transform:scaleX(0.9682)">3</div>
</div>
<div class="r" style="left:1008px;top:318px;width:74px;height:18px;overflow:hidden">
<div class="t" style="left:1.60px;top:3.00px;font-size:13px;color:#000;transform:scaleX(0.9692)">RQ-8</div>
</div>
<div class="r" style="left:1083px;top:318px;width:139px;height:18px;overflow:hidden">
<div class="t" style="left:1.60px;top:3.00px;font-size:13px;color:#000;transform:scaleX(0.9843)">2018-05-14T16:17:35-04</div>
</div>
<div class="r" style="left:1223px;top:318px;width:145px;height:18px;overflow:hidden">
<div class="t" style="left:1.60px;top:3.00px;font-size:13px;color:#000;transform:scaleX(0.9835)">2018-05-14T16:17:36-04</div>
</div>
<div class="r" style="left:1369px;top:318px;width:107px;height:18px;overflow:hidden">
<div class="t" style="left:55.70px;top:3.00px;font-size:13px;color:#000;transform:scaleX(0.9682)">5804546</div>
</div>
<div class="r" style="left:1477px;top:318px;width:63px;height:18px;overflow:hidden">
<div class="t" style="left:1.60px;top:3.00px;font-size:13px;color:#000;transform:scaleX(1.0400)">Status</div>
</div>
<div class="r" style="left:1541px;top:318px;width:63px;height:18px;overflow:hidden">
<div class="t" style="left:39.70px;top:3.00px;font-size:13px;color:#000;transform:scaleX(1.0133)">911</div>
</div>
<div class="r" style="left:1605px;top:318px;width:63px;height:18px;overflow:hidden">
<div class="t" style="left:1.60px;top:3.00px;font-size:13px;color:#000;transform:scaleX(1.0845)">New</div>
</div>
<div class="r" style="left:1669px;top:318px;width:99px;height:18px;overflow:hidden">
<div class="t" style="left:1.60px;top:3.00px;font-size:13px;color:#000;transform:scaleX(1.1678)">https://penn.qtestnet.com/p/79788/portal/project#tab=requirements&amp;object=5&amp;id=9190721</div>
</div>
<div class="r" style="left:1770px;top:318px;width:63px;height:18px;overflow:hidden">
<div class="t" style="left:11.70px;top:3.00px;font-size:13px;color:#000;transform:scaleX(0.9682)">4962291</div>
</div>
<div class="r" style="left:26px;top:337px;width:63px;height:18px;overflow:hidden">
<div class="t" style="left:1.60px;top:3.00px;font-size:13px;color:#000;transform:scaleX(1.0680)">self</div>
</div>
<div class="r" style="left:90px;top:337px;width:316px;height:18px;overflow:hidden">
<div class="t" style="left:1.60px;top:3.00px;font-size:13px;color:#000;transform:scaleX(1.1370)">https://penn.qtestnet.com/api/v3/projects/79788/requirements/9190714</div>
</div>
<div class="r" style="left:408px;top:337px;width:63px;height:18px;overflow:hidden">
<div class="t" style="left:11.70px;top:3.00px;font-size:13px;color:#000;transform:scaleX(0.9682)">9190714</div>
</div>
<div class="r" style="left:472px;top:337px;width:454px;height:18px;overflow:hidden">
<div class="t" style="left:1.60px;top:3.00px;font-size:13px;color:#000;transform:scaleX(0.9311)">SSPA-28</div><div class="t" style="left:53.90px;top:3.00px;font-size:13px;color:#000;transform:scaleX(0.9638)">As</div><div class="t" style="left:71.93px;top:3.00px;font-size:13px;color:#000;transform:scaleX(0.9989)">a</div><div class="t" style="left:82.56px;top:3.00px;font-size:13px;color:#000;transform:scaleX(1.0765)">user,</div><div class="t" style="left:116.31px;top:3.00px;font-size:13px;color:#000;transform:scaleX(1.1295)">I'd</div><div class="t" style="left:134.77px;top:3.00px;font-size:13px;color:#000;transform:scaleX(1.0908)">like</div><div class="t" style="left:159.45px;top:3.00px;font-size:13px;color:#000;transform:scaleX(1.1992)">to</div><div class="t" style="left:175.86px;top:3.00px;font-size:13px;color:#000;transform:scaleX(1.0667)">be</div><div class="t" style="left:194.70px;top:3.00px;font-size:13px;color:#000;transform:scaleX(1.0622)">able</div><div class="t" style="left:224.21px;top:3.00px;font-size:13px;color:#000;transform:scaleX(1.1992)">to</div><div class="t" style="left:240.62px;top:3.00px;font-size:13px;color:#000;transform:scaleX(1.0222)">sign</div><div class="t" style="left:268.41px;top:3.00px;font-size:13px;color:#000;transform:scaleX(1.1578)">out</div><div class="t" style="left:292.74px;top:3.00px;font-size:13px;color:#000;transform:scaleX(1.1578)">of</div><div class="t" style="left:308.70px;top:3.00px;font-size:13px;color:#000;transform:scaleX(1.0889)">my</div><div class="t" style="left:330.98px;top:3.00px;font-size:13px;color:#000;transform:scaleX(1.0722)">account</div>
</div>
<div class="r" style="left:927px;top:337px;width:80px;height:18px;overflow:hidden">
<div class="t" style="left:70.70px;top:3.00px;font-size:13px;color:#000;transform:scaleX(0.9682)">1</div>
</div>
<div class="r" style="left:1008px;top:337px;width:74px;height:18px;overflow:hidden">
<div class="t" style="left:1.60px;top:3.00px;font-size:13px;color:#000;transform:scaleX(0.9692)">RQ-1</div>
</div>
<div class="r" style="left:1083px;top:337px;width:139px;height:18px;overflow:hidden">
<div class="t" style="left:1.60px;top:3.00px;font-size:13px;color:#000;transform:scaleX(0.9843)">2018-05-14T16:17:33-04</div>
</div>
<div class="r" style="left:1223px;top:337px;width:145px;height:18px;overflow:hidden">
<div class="t" style="left:1.60px;top:3.00px;font-size:13px;color:#000;transform:scaleX(0.9835)">2018-05-14T16:17:36-04</div>
</div>
<div class="r" style="left:1369px;top:337px;width:107px;height:18px;overflow:hidden">
<div class="t" style="left:55.70px;top:3.00px;font-size:13px;color:#000;transform:scaleX(0.9682)">5804546</div>
</div>
<div class="r" style="left:1477px;top:337px;width:63px;height:18px;overflow:hidden">
<div class="t" style="left:1.60px;top:3.00px;font-size:13px;color:#000;transform:scaleX(1.0400)">Status</div>
</div>
<div class="r" style="left:1541px;top:337px;width:63px;height:18px;overflow:hidden">
<div class="t" style="left:39.70px;top:3.00px;font-size:13px;color:#000;transform:scaleX(1.0133)">911</div>
</div>
<div class="r" style="left:1605px;top:337px;width:63px;height:18px;overflow:hidden">
<div class="t" style="left:1.60px;top:3.00px;font-size:13px;color:#000;transform:scaleX(1.0845)">New</div>
</div>
<div class="r" style="left:1669px;top:337px;width:99px;height:18px;overflow:hidden">
<div class="t" style="left:1.60px;top:3.00px;font-size:13px;color:#000;transform:scaleX(1.1678)">https://penn.qtestnet.com/p/79788/portal/project#tab=requirements&amp;object=5&amp;id=9190714</div>
</div>
<div class="r" style="left:1770px;top:337px;width:63px;height:18px;overflow:hidden">
<div class="t" style="left:11.70px;top:3.00px;font-size:13px;color:#000;transform:scaleX(0.9682)">4962287</div>
</div>
<div class="r" style="left:26px;top:356px;width:63px;height:18px;overflow:hidden">
<div class="t" style="left:1.60px;top:3.00px;font-size:13px;color:#000;transform:scaleX(1.0680)">self</div>
</div>
<div class="r" style="left:90px;top:356px;width:316px;height:18px;overflow:hidden">
<div class="t" style="left:1.60px;top:3.00px;font-size:13px;color:#000;transform:scaleX(1.1370)">https://penn.qtestnet.com/api/v3/projects/79788/requirements/9190720</div>
</div>
<div class="r" style="left:408px;top:356px;width:63px;height:18px;overflow:hidden">
<div class="t" style="left:11.70px;top:3.00px;font-size:13px;color:#000;transform:scaleX(0.9682)">9190720</div>
</div>
<div class="r" style="left:472px;top:356px;width:454px;height:18px;overflow:hidden">
<div class="t" style="left:1.60px;top:3.00px;font-size:13px;color:#000;transform:scaleX(0.9342)">SSPA-29</div><div class="t" style="left:54.07px;top:3.00px;font-size:13px;color:#000;transform:scaleX(0.9670)">As</div><div class="t" style="left:72.16px;top:3.00px;font-size:13px;color:#000;transform:scaleX(1.0023)">a</div><div class="t" style="left:82.83px;top:3.00px;font-size:13px;color:#000;transform:scaleX(1.0801)">user,</div><div class="t" style="left:116.69px;top:3.00px;font-size:13px;color:#000;transform:scaleX(1.1332)">I'd</div><div class="t" style="left:135.21px;top:3.00px;font-size:13px;color:#000;transform:scaleX(1.0944)">like</div><div class="t" style="left:159.98px;top:3.00px;font-size:13px;color:#000;transform:scaleX(1.2032)">to</div><div class="t" style="left:176.44px;top:3.00px;font-size:13px;color:#000;transform:scaleX(1.0375)">cancel</div><div class="t" style="left:218.85px;top:3.00px;font-size:13px;color:#000;transform:scaleX(1.0925)">my</div><div class="t" style="left:241.20px;top:3.00px;font-size:13px;color:#000;transform:scaleX(1.1203)">order</div>
</div>
<div class="r" style="left:927px;top:356px;width:80px;height:18px;overflow:hidden">
<div class="t" style="left:70.70px;top:3.00px;font-size:13px;color:#000;transform:scaleX(0.9682)">3</div>
</div>
<div class="r" style="left:1008px;top:356px;width:74px;height:18px;overflow:hidden">
<div class="t" style="left:1.60px;top:3.00px;font-size:13px;color:#000;transform:scaleX(0.9692)">RQ-7</div>
</div>
<div class="r" style="left:1083px;top:356px;width:139px;height:18px;overflow:hidden">
<div class="t" style="left:1.60px;top:3.00px;font-size:13px;color:#000;transform:scaleX(0.9843)">2018-05-14T16:17:35-04</div>
</div>
<div class="r" style="left:1223px;top:356px;width:145px;height:18px;overflow:hidden">
<div class="t" style="left:1.60px;top:3.00px;font-size:13px;color:#000;transform:scaleX(0.9835)">2018-05-14T16:17:36-04</div>
</div>
<div class="r" style="left:1369px;top:356px;width:107px;height:18px;overflow:hidden">
<div class="t" style="left:55.70px;top:3.00px;font-size:13px;color:#000;transform:scaleX(0.9682)">5804546</div>
</div>
<div class="r" style="left:1477px;top:356px;width:63px;height:18px;overflow:hidden">
<div class="t" style="left:1.60px;top:3.00px;font-size:13px;color:#000;transform:scaleX(1.0400)">Status</div>
</div>
<div class="r" style="left:1541px;top:356px;width:63px;height:18px;overflow:hidden">
<div class="t" style="left:39.70px;top:3.00px;font-size:13px;color:#000;transform:scaleX(1.0133)">911</div>
</div>
<div class="r" style="left:1605px;top:356px;width:63px;height:18px;overflow:hidden">
<div class="t" style="left:1.60px;top:3.00px;font-size:13px;color:#000;transform:scaleX(1.0845)">New</div>
</div>
<div class="r" style="left:1669px;top:356px;width:99px;height:18px;overflow:hidden">
<div class="t" style="left:1.60px;top:3.00px;font-size:13px;color:#000;transform:scaleX(1.1678)">https://penn.qtestnet.com/p/79788/portal/project#tab=requirements&amp;object=5&amp;id=9190720</div>
</div>
<div class="r" style="left:1770px;top:356px;width:63px;height:18px;overflow:hidden">
<div class="t" style="left:11.70px;top:3.00px;font-size:13px;color:#000;transform:scaleX(0.9682)">4962291</div>
</div>
<div class="r" style="left:26px;top:375px;width:63px;height:18px;overflow:hidden">
<div class="t" style="left:1.60px;top:3.00px;font-size:13px;color:#000;transform:scaleX(1.0680)">self</div>
</div>
<div class="r" style="left:90px;top:375px;width:316px;height:18px;overflow:hidden">
<div class="t" style="left:1.60px;top:3.00px;font-size:13px;color:#000;transform:scaleX(1.1370)">https://penn.qtestnet.com/api/v3/projects/79788/requirements/9190718</div>
</div>
<div class="r" style="left:408px;top:375px;width:63px;height:18px;overflow:hidden">
<div class="t" style="left:11.70px;top:3.00px;font-size:13px;color:#000;transform:scaleX(0.9682)">9190718</div>
</div>
<div class="r" style="left:472px;top:375px;width:454px;height:18px;overflow:hidden">
<div class="t" style="left:1.60px;top:3.00px;font-size:13px;color:#000;transform:scaleX(0.9376)">SSPA-30</div><div class="t" style="left:54.26px;top:3.00px;font-size:13px;color:#000;transform:scaleX(0.9705)">As</div><div class="t" style="left:72.42px;top:3.00px;font-size:13px;color:#000;transform:scaleX(1.0059)">a</div><div class="t" style="left:83.12px;top:3.00px;font-size:13px;color:#000;transform:scaleX(1.0840)">user,</div><div class="t" style="left:117.11px;top:3.00px;font-size:13px;color:#000;transform:scaleX(1.1373)">I'd</div><div class="t" style="left:135.69px;top:3.00px;font-size:13px;color:#000;transform:scaleX(1.0983)">like</div><div class="t" style="left:160.55px;top:3.00px;font-size:13px;color:#000;transform:scaleX(1.2076)">to</div><div class="t" style="left:177.07px;top:3.00px;font-size:13px;color:#000;transform:scaleX(1.1055)">view</div><div class="t" style="left:209.25px;top:3.00px;font-size:13px;color:#000;transform:scaleX(1.0964)">my</div><div class="t" style="left:231.69px;top:3.00px;font-size:13px;color:#000;transform:scaleX(1.1244)">order</div><div class="t" style="left:269.24px;top:3.00px;font-size:13px;color:#000;transform:scaleX(1.1141)">history</div>
</div>
<div class="r" style="left:927px;top:375px;width:80px;height:18px;overflow:hidden">
<div class="t" style="left:70.70px;top:3.00px;font-size:13px;color:#000;transform:scaleX(0.9682)">3</div>
</div>
<div class="r" style="left:1008px;top:375px;width:74px;height:18px;overflow:hidden">
<div class="t" style="left:1.60px;top:3.00px;font-size:13px;color:#000;transform:scaleX(0.9692)">RQ-5</div>
</div>
<div class="r" style="left:1083px;top:375px;width:139px;height:18px;overflow:hidden">
<div class="t" style="left:1.60px;top:3.00px;font-size:13px;color:#000;transform:scaleX(0.9843)">2018-05-14T16:17:35-04</div>
</div>
<div class="r" style="left:1223px;top:375px;width:145px;height:18px;overflow:hidden">
<div class="t" style="left:1.60px;top:3.00px;font-size:13px;color:#000;transform:scaleX(0.9835)">2018-05-14T16:17:36-04</div>
</div>
<div class="r" style="left:1369px;top:375px;width:107px;height:18px;overflow:hidden">
<div class="t" style="left:55.70px;top:3.00px;font-size:13px;color:#000;transform:scaleX(0.9682)">5804546</div>
</div>
<div class="r" style="left:1477px;top:375px;width:63px;height:18px;overflow:hidden">
<div class="t" style="left:1.60px;top:3.00px;font-size:13px;color:#000;transform:scaleX(1.0400)">Status</div>
</div>
<div class="r" style="left:1541px;top:375px;width:63px;height:18px;overflow:hidden">
<div class="t" style="left:39.70px;top:3.00px;font-size:13px;color:#000;transform:scaleX(1.0133)">911</div>
</div>
<div class="r" style="left:1605px;top:375px;width:63px;height:18px;overflow:hidden">
<div class="t" style="left:1.60px;top:3.00px;font-size:13px;color:#000;transform:scaleX(1.0845)">New</div>
</div>
<div class="r" style="left:1669px;top:375px;width:99px;height:18px;overflow:hidden">
<div class="t" style="left:1.60px;top:3.00px;font-size:13px;color:#000;transform:scaleX(1.1678)">https://penn.qtestnet.com/p/79788/portal/project#tab=requirements&amp;object=5&amp;id=9190718</div>
</div>
<div class="r" style="left:1770px;top:375px;width:63px;height:18px;overflow:hidden">
<div class="t" style="left:11.70px;top:3.00px;font-size:13px;color:#000;transform:scaleX(0.9682)">4962291</div>
</div>
<div class="r" style="left:26px;top:394px;width:63px;height:18px;overflow:hidden">
<div class="t" style="left:1.60px;top:3.00px;font-size:13px;color:#000;transform:scaleX(1.0680)">self</div>
</div>
<div class="r" style="left:90px;top:394px;width:316px;height:18px;overflow:hidden">
<div class="t" style="left:1.60px;top:3.00px;font-size:13px;color:#000;transform:scaleX(1.1370)">https://penn.qtestnet.com/api/v3/projects/79788/requirements/9190715</div>
</div>
<div class="r" style="left:408px;top:394px;width:63px;height:18px;overflow:hidden">
<div class="t" style="left:11.70px;top:3.00px;font-size:13px;color:#000;transform:scaleX(0.9682)">9190715</div>
</div>
<div class="r" style="left:472px;top:394px;width:454px;height:18px;overflow:hidden">
<div class="t" style="left:1.60px;top:3.00px;font-size:13px;color:#000;transform:scaleX(0.9439)">SSPA-31</div><div class="t" style="left:54.62px;top:3.00px;font-size:13px;color:#000;transform:scaleX(0.9770)">As</div><div class="t" style="left:72.90px;top:3.00px;font-size:13px;color:#000;transform:scaleX(1.0127)">a</div><div class="t" style="left:83.67px;top:3.00px;font-size:13px;color:#000;transform:scaleX(1.0913)">user,</div><div class="t" style="left:117.89px;top:3.00px;font-size:13px;color:#000;transform:scaleX(1.1450)">I'd</div><div class="t" style="left:136.60px;top:3.00px;font-size:13px;color:#000;transform:scaleX(1.1058)">like</div><div class="t" style="left:161.62px;top:3.00px;font-size:13px;color:#000;transform:scaleX(1.2157)">to</div><div class="t" style="left:178.26px;top:3.00px;font-size:13px;color:#000;transform:scaleX(1.1129)">view</div><div class="t" style="left:210.66px;top:3.00px;font-size:13px;color:#000;transform:scaleX(1.1039)">my</div><div class="t" style="left:233.24px;top:3.00px;font-size:13px;color:#000;transform:scaleX(1.0658)">invoices</div>
</div>
<div class="r" style="left:927px;top:394px;width:80px;height:18px;overflow:hidden">
<div class="t" style="left:70.70px;top:3.00px;font-size:13px;color:#000;transform:scaleX(0.9682)">3</div>
</div>
<div class="r" style="left:1008px;top:394px;width:74px;height:18px;overflow:hidden">
<div class="t" style="left:1.60px;top:3.00px;font-size:13px;color:#000;transform:scaleX(0.9692)">RQ-2</div>
</div>
<div class="r" style="left:1083px;top:394px;width:139px;height:18px;overflow:hidden">
<div class="t" style="left:1.60px;top:3.00px;font-size:13px;color:#000;transform:scaleX(0.9843)">2018-05-14T16:17:34-04</div>
</div>
<div class="r" style="left:1223px;top:394px;width:145px;height:18px;overflow:hidden">
<div class="t" style="left:1.60px;top:3.00px;font-size:13px;color:#000;transform:scaleX(0.9835)">2018-05-14T16:17:36-04</div>
</div>
<div class="r" style="left:1369px;top:394px;width:107px;height:18px;overflow:hidden">
<div class="t" style="left:55.70px;top:3.00px;font-size:13px;color:#000;transform:scaleX(0.9682)">5804546</div>
</div>
<div class="r" style="left:1477px;top:394px;width:63px;height:18px;overflow:hidden">
<div class="t" style="left:1.60px;top:3.00px;font-size:13px;color:#000;transform:scaleX(1.0400)">Status</div>
</div>
<div class="r" style="left:1541px;top:394px;width:63px;height:18px;overflow:hidden">
<div class="t" style="left:39.70px;top:3.00px;font-size:13px;color:#000;transform:scaleX(1.0133)">911</div>
</div>
<div class="r" style="left:1605px;top:394px;width:63px;height:18px;overflow:hidden">
<div class="t" style="left:1.60px;top:3.00px;font-size:13px;color:#000;transform:scaleX(1.0845)">New</div>
</div>
<div class="r" style="left:1669px;top:394px;width:99px;height:18px;overflow:hidden">
<div class="t" style="left:1.60px;top:3.00px;font-size:13px;color:#000;transform:scaleX(1.1678)">https://penn.qtestnet.com/p/79788/portal/project#tab=requirements&amp;object=5&amp;id=9190715</div>
</div>
<div class="r" style="left:1770px;top:394px;width:63px;height:18px;overflow:hidden">
<div class="t" style="left:11.70px;top:3.00px;font-size:13px;color:#000;transform:scaleX(0.9682)">4962287</div>
</div>
<div class="r" style="left:26px;top:413px;width:63px;height:18px;overflow:hidden">
<div class="t" style="left:1.60px;top:3.00px;font-size:13px;color:#000;transform:scaleX(1.0680)">self</div>
</div>
<div class="r" style="left:90px;top:413px;width:316px;height:18px;overflow:hidden">
<div class="t" style="left:1.60px;top:3.00px;font-size:13px;color:#000;transform:scaleX(1.1370)">https://penn.qtestnet.com/api/v3/projects/79788/requirements/9190723</div>
</div>
<div class="r" style="left:408px;top:413px;width:63px;height:18px;overflow:hidden">
<div class="t" style="left:11.70px;top:3.00px;font-size:13px;color:#000;transform:scaleX(0.9682)">9190723</div>
</div>
<div class="r" style="left:472px;top:413px;width:454px;height:18px;overflow:hidden">
<div class="t" style="left:1.60px;top:3.00px;font-size:13px;color:#000;transform:scaleX(0.9350)">SSPA-32</div><div class="t" style="left:54.12px;top:3.00px;font-size:13px;color:#000;transform:scaleX(0.9678)">As</div><div class="t" style="left:72.22px;top:3.00px;font-size:13px;color:#000;transform:scaleX(1.0031)">a</div><div class="t" style="left:82.90px;top:3.00px;font-size:13px;color:#000;transform:scaleX(1.0810)">user,</div><div class="t" style="left:116.79px;top:3.00px;font-size:13px;color:#000;transform:scaleX(1.1342)">I'd</div><div class="t" style="left:135.32px;top:3.00px;font-size:13px;color:#000;transform:scaleX(1.0953)">like</div><div class="t" style="left:160.11px;top:3.00px;font-size:13px;color:#000;transform:scaleX(1.2042)">to</div><div class="t" style="left:176.59px;top:3.00px;font-size:13px;color:#000;transform:scaleX(1.0711)">be</div><div class="t" style="left:195.50px;top:3.00px;font-size:13px;color:#000;transform:scaleX(1.0666)">able</div><div class="t" style="left:225.14px;top:3.00px;font-size:13px;color:#000;transform:scaleX(1.2042)">to</div><div class="t" style="left:241.62px;top:3.00px;font-size:13px;color:#000;transform:scaleX(1.1039)">delete</div><div class="t" style="left:284.14px;top:3.00px;font-size:13px;color:#000;transform:scaleX(1.0978)">items</div><div class="t" style="left:321.66px;top:3.00px;font-size:13px;color:#000;transform:scaleX(1.1626)">out</div><div class="t" style="left:346.10px;top:3.00px;font-size:13px;color:#000;transform:scaleX(1.1626)">of</div><div class="t" style="left:362.12px;top:3.00px;font-size:13px;color:#000;transform:scaleX(1.0934)">my</div><div class="t" style="left:384.50px;top:3.00px;font-size:13px;color:#000;transform:scaleX(1.1077)">cart</div>
</div>
<div class="r" style="left:927px;top:413px;width:80px;height:18px;overflow:hidden">
<div class="t" style="left:70.70px;top:3.00px;font-size:13px;color:#000;transform:scaleX(0.9682)">2</div>
</div>
<div class="r" style="left:1008px;top:413px;width:74px;height:18px;overflow:hidden">
<div class="t" style="left:1.60px;top:3.00px;font-size:13px;color:#000;transform:scaleX(0.9690)">RQ-10</div>
</div>
<div class="r" style="left:1083px;top:413px;width:139px;height:18px;overflow:hidden">
<div class="t" style="left:1.60px;top:3.00px;font-size:13px;color:#000;transform:scaleX(0.9843)">2018-05-14T16:17:35-04</div>
</div>
<div class="r" style="left:1223px;top:413px;width:145px;height:18px;overflow:hidden">
<div class="t" style="left:1.60px;top:3.00px;font-size:13px;color:#000;transform:scaleX(0.9835)">2018-05-14T16:17:36-04</div>
</div>
<div class="r" style="left:1369px;top:413px;width:107px;height:18px;overflow:hidden">
<div class="t" style="left:55.70px;top:3.00px;font-size:13px;color:#000;transform:scaleX(0.9682)">5804546</div>
</div>
<div class="r" style="left:1477px;top:413px;width:63px;height:18px;overflow:hidden">
<div class="t" style="left:1.60px;top:3.00px;font-size:13px;color:#000;transform:scaleX(1.0400)">Status</div>
</div>
<div class="r" style="left:1541px;top:413px;width:63px;height:18px;overflow:hidden">
<div class="t" style="left:39.70px;top:3.00px;font-size:13px;color:#000;transform:scaleX(1.0133)">911</div>
</div>
<div class="r" style="left:1605px;top:413px;width:63px;height:18px;overflow:hidden">
<div class="t" style="left:1.60px;top:3.00px;font-size:13px;color:#000;transform:scaleX(1.0845)">New</div>
</div>
<div class="r" style="left:1669px;top:413px;width:99px;height:18px;overflow:hidden">
<div class="t" style="left:1.60px;top:3.00px;font-size:13px;color:#000;transform:scaleX(1.1678)">https://penn.qtestnet.com/p/79788/portal/project#tab=requirements&amp;object=5&amp;id=9190723</div>
</div>
<div class="r" style="left:1770px;top:413px;width:63px;height:18px;overflow:hidden">
<div class="t" style="left:11.70px;top:3.00px;font-size:13px;color:#000;transform:scaleX(0.9682)">4962293</div>
</div>
<div class="r" style="left:26px;top:432px;width:63px;height:18px;overflow:hidden">
<div class="t" style="left:1.60px;top:3.00px;font-size:13px;color:#000;transform:scaleX(1.0680)">self</div>
</div>
<div class="r" style="left:90px;top:432px;width:316px;height:18px;overflow:hidden">
<div class="t" style="left:1.60px;top:3.00px;font-size:13px;color:#000;transform:scaleX(1.1370)">https://penn.qtestnet.com/api/v3/projects/79788/requirements/9190729</div>
</div>
<div class="r" style="left:408px;top:432px;width:63px;height:18px;overflow:hidden">
<div class="t" style="left:11.70px;top:3.00px;font-size:13px;color:#000;transform:scaleX(0.9682)">9190729</div>
</div>
<div class="r" style="left:472px;top:432px;width:454px;height:18px;overflow:hidden">
<div class="t" style="left:1.60px;top:3.00px;font-size:13px;color:#000;transform:scaleX(0.9333)">SSPA-34</div><div class="t" style="left:54.03px;top:3.00px;font-size:13px;color:#000;transform:scaleX(0.9661)">As</div><div class="t" style="left:72.10px;top:3.00px;font-size:13px;color:#000;transform:scaleX(1.0013)">a</div><div class="t" style="left:82.76px;top:3.00px;font-size:13px;color:#000;transform:scaleX(1.0791)">user,</div><div class="t" style="left:116.58px;top:3.00px;font-size:13px;color:#000;transform:scaleX(1.1321)">I'd</div><div class="t" style="left:135.09px;top:3.00px;font-size:13px;color:#000;transform:scaleX(1.0934)">like</div><div class="t" style="left:159.83px;top:3.00px;font-size:13px;color:#000;transform:scaleX(1.2021)">to</div><div class="t" style="left:176.28px;top:3.00px;font-size:13px;color:#000;transform:scaleX(1.0660)">add</div><div class="t" style="left:202.82px;top:3.00px;font-size:13px;color:#000;transform:scaleX(1.0013)">a</div><div class="t" style="left:213.47px;top:3.00px;font-size:13px;color:#000;transform:scaleX(1.1013)">new</div><div class="t" style="left:243.16px;top:3.00px;font-size:13px;color:#000;transform:scaleX(1.0954)">payment</div><div class="t" style="left:301.19px;top:3.00px;font-size:13px;color:#000;transform:scaleX(1.1187)">method</div>
</div>
<div class="r" style="left:927px;top:432px;width:80px;height:18px;overflow:hidden">
<div class="t" style="left:70.70px;top:3.00px;font-size:13px;color:#000;transform:scaleX(0.9682)">2</div>
</div>
<div class="r" style="left:1008px;top:432px;width:74px;height:18px;overflow:hidden">
<div class="t" style="left:1.60px;top:3.00px;font-size:13px;color:#000;transform:scaleX(0.9690)">RQ-16</div>
</div>
<div class="r" style="left:1083px;top:432px;width:139px;height:18px;overflow:hidden">
<div class="t" style="left:1.60px;top:3.00px;font-size:13px;color:#000;transform:scaleX(0.9843)">2018-05-14T16:17:36-04</div>
</div>
<div class="r" style="left:1223px;top:432px;width:145px;height:18px;overflow:hidden">
<div class="t" style="left:1.60px;top:3.00px;font-size:13px;color:#000;transform:scaleX(0.9835)">2018-05-14T16:17:36-04</div>
</div>
<div class="r" style="left:1369px;top:432px;width:107px;height:18px;overflow:hidden">
<div class="t" style="left:55.70px;top:3.00px;font-size:13px;color:#000;transform:scaleX(0.9682)">5804546</div>
</div>
<div class="r" style="left:1477px;top:432px;width:63px;height:18px;overflow:hidden">
<div class="t" style="left:1.60px;top:3.00px;font-size:13px;color:#000;transform:scaleX(1.0400)">Status</div>
</div>
<div class="r" style="left:1541px;top:432px;width:63px;height:18px;overflow:hidden">
<div class="t" style="left:39.70px;top:3.00px;font-size:13px;color:#000;transform:scaleX(1.0133)">911</div>
</div>
<div class="r" style="left:1605px;top:432px;width:63px;height:18px;overflow:hidden">
<div class="t" style="left:1.60px;top:3.00px;font-size:13px;color:#000;transform:scaleX(1.0845)">New</div>
</div>
<div class="r" style="left:1669px;top:432px;width:99px;height:18px;overflow:hidden">
<div class="t" style="left:1.60px;top:3.00px;font-size:13px;color:#000;transform:scaleX(1.1678)">https://penn.qtestnet.com/p/79788/portal/project#tab=requirements&amp;object=5&amp;id=9190729</div>
</div>
<div class="r" style="left:1770px;top:432px;width:63px;height:18px;overflow:hidden">
<div class="t" style="left:11.70px;top:3.00px;font-size:13px;color:#000;transform:scaleX(0.9682)">4962293</div>
</div>
<div class="r" style="left:26px;top:451px;width:63px;height:18px;overflow:hidden">
<div class="t" style="left:1.60px;top:3.00px;font-size:13px;color:#000;transform:scaleX(1.0680)">self</div>
</div>
<div class="r" style="left:90px;top:451px;width:316px;height:18px;overflow:hidden">
<div class="t" style="left:1.60px;top:3.00px;font-size:13px;color:#000;transform:scaleX(1.1370)">https://penn.qtestnet.com/api/v3/projects/79788/requirements/9190727</div>
</div>
<div class="r" style="left:408px;top:451px;width:63px;height:18px;overflow:hidden">
<div class="t" style="left:11.70px;top:3.00px;font-size:13px;color:#000;transform:scaleX(0.9682)">9190727</div>
</div>
<div class="r" style="left:472px;top:451px;width:454px;height:18px;overflow:hidden">
<div class="t" style="left:1.60px;top:3.00px;font-size:13px;color:#000;transform:scaleX(0.9347)">SSPA-35</div><div class="t" style="left:54.10px;top:3.00px;font-size:13px;color:#000;transform:scaleX(0.9675)">As</div><div class="t" style="left:72.20px;top:3.00px;font-size:13px;color:#000;transform:scaleX(1.0028)">a</div><div class="t" style="left:82.87px;top:3.00px;font-size:13px;color:#000;transform:scaleX(1.0807)">user,</div><div class="t" style="left:116.75px;top:3.00px;font-size:13px;color:#000;transform:scaleX(1.1338)">I'd</div><div class="t" style="left:135.28px;top:3.00px;font-size:13px;color:#000;transform:scaleX(1.0950)">like</div><div class="t" style="left:160.06px;top:3.00px;font-size:13px;color:#000;transform:scaleX(1.2038)">to</div><div class="t" style="left:176.54px;top:3.00px;font-size:13px;color:#000;transform:scaleX(1.0961)">track</div><div class="t" style="left:210.84px;top:3.00px;font-size:13px;color:#000;transform:scaleX(1.1373)">the</div><div class="t" style="left:234.81px;top:3.00px;font-size:13px;color:#000;transform:scaleX(1.0922)">delivery</div><div class="t" style="left:287.16px;top:3.00px;font-size:13px;color:#000;transform:scaleX(1.1623)">of</div><div class="t" style="left:303.18px;top:3.00px;font-size:13px;color:#000;transform:scaleX(1.0931)">my</div><div class="t" style="left:325.55px;top:3.00px;font-size:13px;color:#000;transform:scaleX(1.0860)">order/package</div>
</div>
<div class="r" style="left:927px;top:451px;width:80px;height:18px;overflow:hidden">
<div class="t" style="left:70.70px;top:3.00px;font-size:13px;color:#000;transform:scaleX(0.9682)">2</div>
</div>
<div class="r" style="left:1008px;top:451px;width:74px;height:18px;overflow:hidden">
<div class="t" style="left:1.60px;top:3.00px;font-size:13px;color:#000;transform:scaleX(0.9690)">RQ-14</div>
</div>
<div class="r" style="left:1083px;top:451px;width:139px;height:18px;overflow:hidden">
<div class="t" style="left:1.60px;top:3.00px;font-size:13px;color:#000;transform:scaleX(0.9843)">2018-05-14T16:17:35-04</div>
</div>
<div class="r" style="left:1223px;top:451px;width:145px;height:18px;overflow:hidden">
<div class="t" style="left:1.60px;top:3.00px;font-size:13px;color:#000;transform:scaleX(0.9835)">2018-05-14T16:17:36-04</div>
</div>
<div class="r" style="left:1369px;top:451px;width:107px;height:18px;overflow:hidden">
<div class="t" style="left:55.70px;top:3.00px;font-size:13px;color:#000;transform:scaleX(0.9682)">5804546</div>
</div>
<div class="r" style="left:1477px;top:451px;width:63px;height:18px;overflow:hidden">
<div class="t" style="left:1.60px;top:3.00px;font-size:13px;color:#000;transform:scaleX(1.0400)">Status</div>
</div>
<div class="r" style="left:1541px;top:451px;width:63px;height:18px;overflow:hidden">
<div class="t" style="left:39.70px;top:3.00px;font-size:13px;color:#000;transform:scaleX(1.0133)">911</div>
</div>
<div class="r" style="left:1605px;top:451px;width:63px;height:18px;overflow:hidden">
<div class="t" style="left:1.60px;top:3.00px;font-size:13px;color:#000;transform:scaleX(1.0845)">New</div>
</div>
<div class="r" style="left:1669px;top:451px;width:99px;height:18px;overflow:hidden">
<div class="t" style="left:1.60px;top:3.00px;font-size:13px;color:#000;transform:scaleX(1.1678)">https://penn.qtestnet.com/p/79788/portal/project#tab=requirements&amp;object=5&amp;id=9190727</div>
</div>
<div class="r" style="left:1770px;top:451px;width:63px;height:18px;overflow:hidden">
<div class="t" style="left:11.70px;top:3.00px;font-size:13px;color:#000;transform:scaleX(0.9682)">4962293</div>
</div>
<div class="r" style="left:26px;top:470px;width:63px;height:18px;overflow:hidden">
<div class="t" style="left:1.60px;top:3.00px;font-size:13px;color:#000;transform:scaleX(1.0680)">self</div>
</div>
<div class="r" style="left:90px;top:470px;width:316px;height:18px;overflow:hidden">
<div class="t" style="left:1.60px;top:3.00px;font-size:13px;color:#000;transform:scaleX(1.1370)">https://penn.qtestnet.com/api/v3/projects/79788/requirements/9190724</div>
</div>
<div class="r" style="left:408px;top:470px;width:63px;height:18px;overflow:hidden">
<div class="t" style="left:11.70px;top:3.00px;font-size:13px;color:#000;transform:scaleX(0.9682)">9190724</div>
</div>
<div class="r" style="left:472px;top:470px;width:454px;height:18px;overflow:hidden">
<div class="t" style="left:1.60px;top:3.00px;font-size:13px;color:#000;transform:scaleX(0.9379)">SSPA-36</div><div class="t" style="left:54.28px;top:3.00px;font-size:13px;color:#000;transform:scaleX(0.9708)">As</div><div class="t" style="left:72.44px;top:3.00px;font-size:13px;color:#000;transform:scaleX(1.0062)">a</div><div class="t" style="left:83.15px;top:3.00px;font-size:13px;color:#000;transform:scaleX(1.0843)">user,</div><div class="t" style="left:117.14px;top:3.00px;font-size:13px;color:#000;transform:scaleX(1.1376)">I'd</div><div class="t" style="left:135.73px;top:3.00px;font-size:13px;color:#000;transform:scaleX(1.0987)">like</div><div class="t" style="left:160.60px;top:3.00px;font-size:13px;color:#000;transform:scaleX(1.2079)">to</div><div class="t" style="left:177.13px;top:3.00px;font-size:13px;color:#000;transform:scaleX(1.1030)">update</div><div class="t" style="left:224.42px;top:3.00px;font-size:13px;color:#000;transform:scaleX(1.0968)">my</div><div class="t" style="left:246.86px;top:3.00px;font-size:13px;color:#000;transform:scaleX(1.1423)">profile</div>
</div>
<div class="r" style="left:927px;top:470px;width:80px;height:18px;overflow:hidden">
<div class="t" style="left:70.70px;top:3.00px;font-size:13px;color:#000;transform:scaleX(0.9682)">2</div>
</div>
<div class="r" style="left:1008px;top:470px;width:74px;height:18px;overflow:hidden">
<div class="t" style="left:1.60px;top:3.00px;font-size:13px;color:#000;transform:scaleX(0.9941)">RQ-11</div>
</div>
<div class="r" style="left:1083px;top:470px;width:139px;height:18px;overflow:hidden">
<div class="t" style="left:1.60px;top:3.00px;font-size:13px;color:#000;transform:scaleX(0.9843)">2018-05-14T16:17:35-04</div>
</div>
<div class="r" style="left:1223px;top:470px;width:145px;height:18px;overflow:hidden">
<div class="t" style="left:1.60px;top:3.00px;font-size:13px;color:#000;transform:scaleX(0.9835)">2018-05-14T16:17:36-04</div>
</div>
<div class="r" style="left:1369px;top:470px;width:107px;height:18px;overflow:hidden">
<div class="t" style="left:55.70px;top:3.00px;font-size:13px;color:#000;transform:scaleX(0.9682)">5804546</div>
</div>
<div class="r" style="left:1477px;top:470px;width:63px;height:18px;overflow:hidden">
<div class="t" style="left:1.60px;top:3.00px;font-size:13px;color:#000;transform:scaleX(1.0400)">Status</div>
</div>
<div class="r" style="left:1541px;top:470px;width:63px;height:18px;overflow:hidden">
<div class="t" style="left:39.70px;top:3.00px;font-size:13px;color:#000;transform:scaleX(1.0133)">911</div>
</div>
<div class="r" style="left:1605px;top:470px;width:63px;height:18px;overflow:hidden">
<div class="t" style="left:1.60px;top:3.00px;font-size:13px;color:#000;transform:scaleX(1.0845)">New</div>
</div>
<div class="r" style="left:1669px;top:470px;width:99px;height:18px;overflow:hidden">
<div class="t" style="left:1.60px;top:3.00px;font-size:13px;color:#000;transform:scaleX(1.1678)">https://penn.qtestnet.com/p/79788/portal/project#tab=requirements&amp;object=5&amp;id=9190724</div>
</div>
<div class="r" style="left:1770px;top:470px;width:63px;height:18px;overflow:hidden">
<div class="t" style="left:11.70px;top:3.00px;font-size:13px;color:#000;transform:scaleX(0.9682)">4962293</div>
</div>
<div class="r" style="left:26px;top:489px;width:63px;height:18px;overflow:hidden">
<div class="t" style="left:1.60px;top:3.00px;font-size:13px;color:#000;transform:scaleX(1.0680)">self</div>
</div>
<div class="r" style="left:90px;top:489px;width:316px;height:18px;overflow:hidden">
<div class="t" style="left:1.60px;top:3.00px;font-size:13px;color:#000;transform:scaleX(1.1370)">https://penn.qtestnet.com/api/v3/projects/79788/requirements/9190726</div>
</div>
<div class="r" style="left:408px;top:489px;width:63px;height:18px;overflow:hidden">
<div class="t" style="left:11.70px;top:3.00px;font-size:13px;color:#000;transform:scaleX(0.9682)">9190726</div>
</div>
<div class="r" style="left:472px;top:489px;width:454px;height:18px;overflow:hidden">
<div class="t" style="left:1.60px;top:3.00px;font-size:13px;color:#000;transform:scaleX(0.9353)">SSPA-37</div><div class="t" style="left:54.14px;top:3.00px;font-size:13px;color:#000;transform:scaleX(0.9681)">As</div><div class="t" style="left:72.25px;top:3.00px;font-size:13px;color:#000;transform:scaleX(1.0035)">a</div><div class="t" style="left:82.93px;top:3.00px;font-size:13px;color:#000;transform:scaleX(1.0814)">user,</div><div class="t" style="left:116.83px;top:3.00px;font-size:13px;color:#000;transform:scaleX(1.1345)">I'd</div><div class="t" style="left:135.37px;top:3.00px;font-size:13px;color:#000;transform:scaleX(1.0957)">like</div><div class="t" style="left:160.17px;top:3.00px;font-size:13px;color:#000;transform:scaleX(1.2046)">to</div><div class="t" style="left:176.65px;top:3.00px;font-size:13px;color:#000;transform:scaleX(1.0645)">receive</div><div class="t" style="left:224.68px;top:3.00px;font-size:13px;color:#000;transform:scaleX(1.0891)">recommendations</div><div class="t" style="left:340.64px;top:3.00px;font-size:13px;color:#000;transform:scaleX(1.1027)">on</div><div class="t" style="left:360.01px;top:3.00px;font-size:13px;color:#000;transform:scaleX(1.1330)">what</div><div class="t" style="left:394.54px;top:3.00px;font-size:13px;color:#000;transform:scaleX(1.2046)">to</div><div class="t" style="left:411.03px;top:3.00px;font-size:13px;color:#000;transform:scaleX(1.0864)">buy</div>
</div>
<div class="r" style="left:927px;top:489px;width:80px;height:18px;overflow:hidden">
<div class="t" style="left:70.70px;top:3.00px;font-size:13px;color:#000;transform:scaleX(0.9682)">2</div>
</div>
<div class="r" style="left:1008px;top:489px;width:74px;height:18px;overflow:hidden">
<div class="t" style="left:1.60px;top:3.00px;font-size:13px;color:#000;transform:scaleX(0.9690)">RQ-13</div>
</div>
<div class="r" style="left:1083px;top:489px;width:139px;height:18px;overflow:hidden">
<div class="t" style="left:1.60px;top:3.00px;font-size:13px;color:#000;transform:scaleX(0.9843)">2018-05-14T16:17:35-04</div>
</div>
<div class="r" style="left:1223px;top:489px;width:145px;height:18px;overflow:hidden">
<div class="t" style="left:1.60px;top:3.00px;font-size:13px;color:#000;transform:scaleX(0.9835)">2018-05-14T16:17:36-04</div>
</div>
<div class="r" style="left:1369px;top:489px;width:107px;height:18px;overflow:hidden">
<div class="t" style="left:55.70px;top:3.00px;font-size:13px;color:#000;transform:scaleX(0.9682)">5804546</div>
</div>
<div class="r" style="left:1477px;top:489px;width:63px;height:18px;overflow:hidden">
<div class="t" style="left:1.60px;top:3.00px;font-size:13px;color:#000;transform:scaleX(1.0400)">Status</div>
</div>
<div class="r" style="left:1541px;top:489px;width:63px;height:18px;overflow:hidden">
<div class="t" style="left:39.70px;top:3.00px;font-size:13px;color:#000;transform:scaleX(1.0133)">911</div>
</div>
<div class="r" style="left:1605px;top:489px;width:63px;height:18px;overflow:hidden">
<div class="t" style="left:1.60px;top:3.00px;font-size:13px;color:#000;transform:scaleX(1.0845)">New</div>
</div>
<div class="r" style="left:1669px;top:489px;width:99px;height:18px;overflow:hidden">
<div class="t" style="left:1.60px;top:3.00px;font-size:13px;color:#000;transform:scaleX(1.1678)">https://penn.qtestnet.com/p/79788/portal/project#tab=requirements&amp;object=5&amp;id=9190726</div>
</div>
<div class="r" style="left:1770px;top:489px;width:63px;height:18px;overflow:hidden">
<div class="t" style="left:11.70px;top:3.00px;font-size:13px;color:#000;transform:scaleX(0.9682)">4962293</div>
</div>
<div class="r" style="left:26px;top:508px;width:63px;height:18px;overflow:hidden">
<div class="t" style="left:1.60px;top:3.00px;font-size:13px;color:#000;transform:scaleX(1.0680)">self</div>
</div>
<div class="r" style="left:90px;top:508px;width:316px;height:18px;overflow:hidden">
<div class="t" style="left:1.60px;top:3.00px;font-size:13px;color:#000;transform:scaleX(1.1370)">https://penn.qtestnet.com/api/v3/projects/79788/requirements/9190722</div>
</div>
<div class="r" style="left:408px;top:508px;width:63px;height:18px;overflow:hidden">
<div class="t" style="left:11.70px;top:3.00px;font-size:13px;color:#000;transform:scaleX(0.9682)">9190722</div>
</div>
<div class="r" style="left:472px;top:508px;width:454px;height:18px;overflow:hidden">
<div class="t" style="left:1.60px;top:3.00px;font-size:13px;color:#000;transform:scaleX(0.9374)">SSPA-38</div><div class="t" style="left:54.25px;top:3.00px;font-size:13px;color:#000;transform:scaleX(0.9703)">As</div><div class="t" style="left:72.41px;top:3.00px;font-size:13px;color:#000;transform:scaleX(1.0057)">a</div><div class="t" style="left:83.11px;top:3.00px;font-size:13px;color:#000;transform:scaleX(1.0838)">user,</div><div class="t" style="left:117.09px;top:3.00px;font-size:13px;color:#000;transform:scaleX(1.1371)">I'd</div><div class="t" style="left:135.67px;top:3.00px;font-size:13px;color:#000;transform:scaleX(1.0981)">like</div><div class="t" style="left:160.52px;top:3.00px;font-size:13px;color:#000;transform:scaleX(1.2073)">to</div><div class="t" style="left:177.04px;top:3.00px;font-size:13px;color:#000;transform:scaleX(1.0144)">&quot;Save</div><div class="t" style="left:215.22px;top:3.00px;font-size:13px;color:#000;transform:scaleX(1.1819)">for</div><div class="t" style="left:236.58px;top:3.00px;font-size:13px;color:#000;transform:scaleX(1.1627)">later&quot;</div><div class="t" style="left:274.78px;top:3.00px;font-size:13px;color:#000;transform:scaleX(1.1006)">items</div><div class="t" style="left:312.40px;top:3.00px;font-size:13px;color:#000;transform:scaleX(1.1721)">that</div><div class="t" style="left:341.24px;top:3.00px;font-size:13px;color:#000;transform:scaleX(1.0706)">are</div><div class="t" style="left:364.79px;top:3.00px;font-size:13px;color:#000;transform:scaleX(1.1325)">in</div><div class="t" style="left:379.68px;top:3.00px;font-size:13px;color:#000;transform:scaleX(1.0963)">my</div><div class="t" style="left:402.11px;top:3.00px;font-size:13px;color:#000;transform:scaleX(1.0832)">shopping</div>
</div>
<div class="r" style="left:927px;top:508px;width:80px;height:18px;overflow:hidden">
<div class="t" style="left:70.70px;top:3.00px;font-size:13px;color:#000;transform:scaleX(0.9682)">2</div>
</div>
<div class="r" style="left:1008px;top:508px;width:74px;height:18px;overflow:hidden">
<div class="t" style="left:1.60px;top:3.00px;font-size:13px;color:#000;transform:scaleX(0.9692)">RQ-9</div>
</div>
<div class="r" style="left:1083px;top:508px;width:139px;height:18px;overflow:hidden">
<div class="t" style="left:1.60px;top:3.00px;font-size:13px;color:#000;transform:scaleX(0.9843)">2018-05-14T16:17:35-04</div>
</div>
<div class="r" style="left:1223px;top:508px;width:145px;height:18px;overflow:hidden">
<div class="t" style="left:1.60px;top:3.00px;font-size:13px;color:#000;transform:scaleX(0.9835)">2018-05-14T16:17:36-04</div>
</div>
<div class="r" style="left:1369px;top:508px;width:107px;height:18px;overflow:hidden">
<div class="t" style="left:55.70px;top:3.00px;font-size:13px;color:#000;transform:scaleX(0.9682)">5804546</div>
</div>
<div class="r" style="left:1477px;top:508px;width:63px;height:18px;overflow:hidden">
<div class="t" style="left:1.60px;top:3.00px;font-size:13px;color:#000;transform:scaleX(1.0400)">Status</div>
</div>
<div class="r" style="left:1541px;top:508px;width:63px;height:18px;overflow:hidden">
<div class="t" style="left:39.70px;top:3.00px;font-size:13px;color:#000;transform:scaleX(1.0133)">911</div>
</div>
<div class="r" style="left:1605px;top:508px;width:63px;height:18px;overflow:hidden">
<div class="t" style="left:1.60px;top:3.00px;font-size:13px;color:#000;transform:scaleX(1.0845)">New</div>
</div>
<div class="r" style="left:1669px;top:508px;width:99px;height:18px;overflow:hidden">
<div class="t" style="left:1.60px;top:3.00px;font-size:13px;color:#000;transform:scaleX(1.1678)">https://penn.qtestnet.com/p/79788/portal/project#tab=requirements&amp;object=5&amp;id=9190722</div>
</div>
<div class="r" style="left:1770px;top:508px;width:63px;height:18px;overflow:hidden">
<div class="t" style="left:11.70px;top:3.00px;font-size:13px;color:#000;transform:scaleX(0.9682)">4962293</div>
</div>
<div class="r" style="left:26px;top:527px;width:63px;height:18px;overflow:hidden">
<div class="t" style="left:1.60px;top:3.00px;font-size:13px;color:#000;transform:scaleX(1.0680)">self</div>
</div>
<div class="r" style="left:90px;top:527px;width:316px;height:18px;overflow:hidden">
<div class="t" style="left:1.60px;top:3.00px;font-size:13px;color:#000;transform:scaleX(1.1370)">https://penn.qtestnet.com/api/v3/projects/79788/requirements/9190725</div>
</div>
<div class="r" style="left:408px;top:527px;width:63px;height:18px;overflow:hidden">
<div class="t" style="left:11.70px;top:3.00px;font-size:13px;color:#000;transform:scaleX(0.9682)">9190725</div>
</div>
<div class="r" style="left:472px;top:527px;width:454px;height:18px;overflow:hidden">
<div class="t" style="left:1.60px;top:3.00px;font-size:13px;color:#000;transform:scaleX(0.9364)">SSPA-39</div><div class="t" style="left:54.20px;top:3.00px;font-size:13px;color:#000;transform:scaleX(0.9693)">As</div><div class="t" style="left:72.33px;top:3.00px;font-size:13px;color:#000;transform:scaleX(1.0046)">a</div><div class="t" style="left:83.02px;top:3.00px;font-size:13px;color:#000;transform:scaleX(1.0826)">user,</div><div class="t" style="left:116.97px;top:3.00px;font-size:13px;color:#000;transform:scaleX(1.1359)">I'd</div><div class="t" style="left:135.53px;top:3.00px;font-size:13px;color:#000;transform:scaleX(1.0970)">like</div><div class="t" style="left:160.35px;top:3.00px;font-size:13px;color:#000;transform:scaleX(1.2061)">to</div><div class="t" style="left:176.86px;top:3.00px;font-size:13px;color:#000;transform:scaleX(1.0029)">see</div><div class="t" style="left:201.31px;top:3.00px;font-size:13px;color:#000;transform:scaleX(1.0954)">competing</div><div class="t" style="left:270.43px;top:3.00px;font-size:13px;color:#000;transform:scaleX(1.0561)">prices</div><div class="t" style="left:310.48px;top:3.00px;font-size:13px;color:#000;transform:scaleX(1.1806)">for</div><div class="t" style="left:331.82px;top:3.00px;font-size:13px;color:#000;transform:scaleX(1.0533)">an</div><div class="t" style="left:350.48px;top:3.00px;font-size:13px;color:#000;transform:scaleX(1.1490)">item</div>
</div>
<div class="r" style="left:927px;top:527px;width:80px;height:18px;overflow:hidden">
<div class="t" style="left:70.70px;top:3.00px;font-size:13px;color:#000;transform:scaleX(0.9682)">2</div>
</div>
<div class="r" style="left:1008px;top:527px;width:74px;height:18px;overflow:hidden">
<div class="t" style="left:1.60px;top:3.00px;font-size:13px;color:#000;transform:scaleX(0.9690)">RQ-12</div>
</div>
<div class="r" style="left:1083px;top:527px;width:139px;height:18px;overflow:hidden">
<div class="t" style="left:1.60px;top:3.00px;font-size:13px;color:#000;transform:scaleX(0.9843)">2018-05-14T16:17:35-04</div>
</div>
<div class="r" style="left:1223px;top:527px;width:145px;height:18px;overflow:hidden">
<div class="t" style="left:1.60px;top:3.00px;font-size:13px;color:#000;transform:scaleX(0.9835)">2018-05-14T16:17:36-04</div>
</div>
<div class="r" style="left:1369px;top:527px;width:107px;height:18px;overflow:hidden">
<div class="t" style="left:55.70px;top:3.00px;font-size:13px;color:#000;transform:scaleX(0.9682)">5804546</div>
</div>
<div class="r" style="left:1477px;top:527px;width:63px;height:18px;overflow:hidden">
<div class="t" style="left:1.60px;top:3.00px;font-size:13px;color:#000;transform:scaleX(1.0400)">Status</div>
</div>
<div class="r" style="left:1541px;top:527px;width:63px;height:18px;overflow:hidden">
<div class="t" style="left:39.70px;top:3.00px;font-size:13px;color:#000;transform:scaleX(1.0133)">911</div>
</div>
<div class="r" style="left:1605px;top:527px;width:63px;height:18px;overflow:hidden">
<div class="t" style="left:1.60px;top:3.00px;font-size:13px;color:#000;transform:scaleX(1.0845)">New</div>
</div>
<div class="r" style="left:1669px;top:527px;width:99px;height:18px;overflow:hidden">
<div class="t" style="left:1.60px;top:3.00px;font-size:13px;color:#000;transform:scaleX(1.1678)">https://penn.qtestnet.com/p/79788/portal/project#tab=requirements&amp;object=5&amp;id=9190725</div>
</div>
<div class="r" style="left:1770px;top:527px;width:63px;height:18px;overflow:hidden">
<div class="t" style="left:11.70px;top:3.00px;font-size:13px;color:#000;transform:scaleX(0.9682)">4962293</div>
</div>
<div class="r" style="left:26px;top:546px;width:63px;height:18px;overflow:hidden">
<div class="t" style="left:1.60px;top:3.00px;font-size:13px;color:#000;transform:scaleX(1.0680)">self</div>
</div>
<div class="r" style="left:90px;top:546px;width:316px;height:18px;overflow:hidden">
<div class="t" style="left:1.60px;top:3.00px;font-size:13px;color:#000;transform:scaleX(1.1370)">https://penn.qtestnet.com/api/v3/projects/79788/requirements/9190728</div>
</div>
<div class="r" style="left:408px;top:546px;width:63px;height:18px;overflow:hidden">
<div class="t" style="left:11.70px;top:3.00px;font-size:13px;color:#000;transform:scaleX(0.9682)">9190728</div>
</div>
<div class="r" style="left:472px;top:546px;width:454px;height:18px;overflow:hidden">
<div class="t" style="left:1.60px;top:3.00px;font-size:13px;color:#000;transform:scaleX(0.9302)">SSPA-40</div><div class="t" style="left:53.85px;top:3.00px;font-size:13px;color:#000;transform:scaleX(0.9628)">As</div><div class="t" style="left:71.86px;top:3.00px;font-size:13px;color:#000;transform:scaleX(0.9980)">a</div><div class="t" style="left:82.48px;top:3.00px;font-size:13px;color:#000;transform:scaleX(1.0754)">user,</div><div class="t" style="left:116.20px;top:3.00px;font-size:13px;color:#000;transform:scaleX(1.1283)">I'd</div><div class="t" style="left:134.64px;top:3.00px;font-size:13px;color:#000;transform:scaleX(1.0897)">like</div><div class="t" style="left:159.30px;top:3.00px;font-size:13px;color:#000;transform:scaleX(1.1980)">to</div><div class="t" style="left:175.69px;top:3.00px;font-size:13px;color:#000;transform:scaleX(1.0286)">search</div><div class="t" style="left:219.23px;top:3.00px;font-size:13px;color:#000;transform:scaleX(1.0730)">by</div><div class="t" style="left:237.37px;top:3.00px;font-size:13px;color:#000;transform:scaleX(1.0675)">category</div>
</div>
<div class="r" style="left:927px;top:546px;width:80px;height:18px;overflow:hidden">
<div class="t" style="left:70.70px;top:3.00px;font-size:13px;color:#000;transform:scaleX(0.9682)">1</div>
</div>
<div class="r" style="left:1008px;top:546px;width:74px;height:18px;overflow:hidden">
<div class="t" style="left:1.60px;top:3.00px;font-size:13px;color:#000;transform:scaleX(0.9690)">RQ-15</div>
</div>
<div class="r" style="left:1083px;top:546px;width:139px;height:18px;overflow:hidden">
<div class="t" style="left:1.60px;top:3.00px;font-size:13px;color:#000;transform:scaleX(0.9843)">2018-05-14T16:17:36-04</div>
</div>
<div class="r" style="left:1223px;top:546px;width:145px;height:18px;overflow:hidden">
<div class="t" style="left:1.60px;top:3.00px;font-size:13px;color:#000;transform:scaleX(0.9835)">2018-05-14T16:17:36-04</div>
</div>
<div class="r" style="left:1369px;top:546px;width:107px;height:18px;overflow:hidden">
<div class="t" style="left:55.70px;top:3.00px;font-size:13px;color:#000;transform:scaleX(0.9682)">5804546</div>
</div>
<div class="r" style="left:1477px;top:546px;width:63px;height:18px;overflow:hidden">
<div class="t" style="left:1.60px;top:3.00px;font-size:13px;color:#000;transform:scaleX(1.0400)">Status</div>
</div>
<div class="r" style="left:1541px;top:546px;width:63px;height:18px;overflow:hidden">
<div class="t" style="left:39.70px;top:3.00px;font-size:13px;color:#000;transform:scaleX(1.0133)">911</div>
</div>
<div class="r" style="left:1605px;top:546px;width:63px;height:18px;overflow:hidden">
<div class="t" style="left:1.60px;top:3.00px;font-size:13px;color:#000;transform:scaleX(1.0845)">New</div>
</div>
<div class="r" style="left:1669px;top:546px;width:99px;height:18px;overflow:hidden">
<div class="t" style="left:1.60px;top:3.00px;font-size:13px;color:#000;transform:scaleX(1.1678)">https://penn.qtestnet.com/p/79788/portal/project#tab=requirements&amp;object=5&amp;id=9190728</div>
</div>
<div class="r" style="left:1770px;top:546px;width:63px;height:18px;overflow:hidden">
<div class="t" style="left:11.70px;top:3.00px;font-size:13px;color:#000;transform:scaleX(0.9682)">4962293</div>
</div>
</div>
<svg class="r" style="left:300px;top:100px;" width="200" height="140" viewBox="0 0 200 140"><defs><filter id="sh" x="-20%" y="-20%" width="140%" height="140%"><feDropShadow dx="2" dy="2.5" stdDeviation="1.6" flood-color="#000" flood-opacity="0.75"/></filter></defs>
<polygon filter="url(#sh)" fill="#ff0000" points="93.2,65.5 136.0,111.5 132.3,114.9 151.4,121 146.7,101.6 143.0,105.0 100.2,59.1"/></svg>
<div class="r" style="left:320px;top:115px;width:325px;height:51px;box-sizing:border-box;border:6px solid #ff0000;border-radius:10px;background:#fff;box-shadow:2px 3px 3px rgba(0,0,0,0.7)"></div>
<div class="t " style="left:336.37px;top:131.58px;font-size:20px;color:#111;transform:scaleX(0.9912);">Filter by ID and remove blanks</div>
</body></html>
